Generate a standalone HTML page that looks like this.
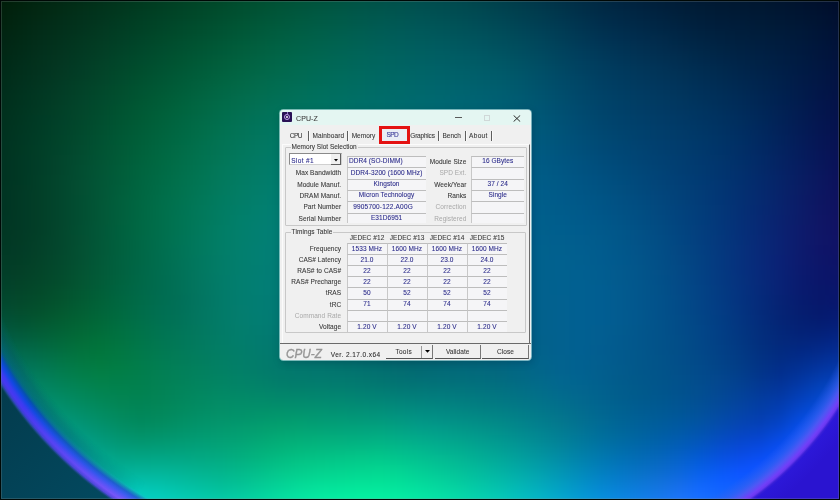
<!DOCTYPE html>
<html><head><meta charset="utf-8">
<style>
html,body{margin:0;padding:0;width:840px;height:500px;overflow:hidden;background:#03533a}
#bg{position:absolute;left:-20px;top:-20px;width:880px;filter:blur(2px)}
#bg i{display:block;height:5px}
#ov{position:absolute;left:0;top:0}
.frame{position:absolute;left:0;top:0;width:840px;height:500px;box-sizing:border-box;border:1px solid #000805;box-shadow:inset 0 0 0 1px rgba(140,150,150,.25)}
#win{will-change:transform;position:absolute;left:280px;top:110px;width:251px;height:250px;background:#f0f0f0;border-radius:3.5px;overflow:hidden;font-family:"Liberation Sans",sans-serif;font-size:6.5px;color:#303030;letter-spacing:0.08px;box-shadow:0 0 0 1px rgba(200,240,240,.6),1px 2px 8px rgba(0,10,30,.22)}
#win *{position:absolute;white-space:pre;line-height:1}
.tb{left:0;top:0;width:251px;height:15px;background:#e4f6f2}
.t{color:#383838;-webkit-text-stroke:0.08px #383838}
.tab{letter-spacing:0.15px}
.logo{font:italic 13.4px "Liberation Sans",sans-serif;color:#969696;letter-spacing:0.1px;-webkit-text-stroke:0.4px #969696;transform:scaleX(0.87);transform-origin:0 0}
.v{color:#2a2a8a;-webkit-text-stroke:0.08px #2a2a8a}
.g{color:#a8a8a8}
.box{background:#f5f5f7;border-top:1px solid #bdbdbd;border-left:1px solid #c8c8c8;box-sizing:border-box}
.grp{border:1px solid #c8c8c8;box-sizing:border-box;border-radius:1px}
.lbl{background:#f0f0f0;padding:0 1px}
.r{text-align:right}
.c{text-align:center}
.sep{width:1px;height:10.5px;background:#5e5e5e;border-right:1px solid #fafafa}
.btn{background:#f0f0f0;border-bottom:1px solid #555;border-right:1px solid #777;box-sizing:border-box}
</style></head><body>
<div id="bg">
<i style="background:linear-gradient(90deg,#001500 0px,#001904 20px,#011d08 40px,#01210b 60px,#01240e 80px,#012811 100px,#012c14 120px,#003017 140px,#003419 160px,#00381c 180px,#003b1f 200px,#003f21 220px,#004325 240px,#004628 260px,#00482c 280px,#004b2f 300px,#004c33 320px,#004d37 340px,#004d3b 360px,#004c3e 380px,#004b41 400px,#004a43 420px,#004745 440px,#004545 460px,#004245 480px,#003e45 500px,#003a44 520px,#003542 540px,#003141 560px,#002c3f 580px,#00273d 600px,#00233a 620px,#002038 640px,#001c35 660px,#001a32 680px,#00182f 700px,#00162d 720px,#00142b 740px,#001329 760px,#001228 780px,#001127 800px,#000f26 820px,#000c25 840px,#000923 860px,#000522 880px)"></i>
<i style="background:linear-gradient(90deg,#001602 0px,#001a05 20px,#011e09 40px,#01220c 60px,#012610 80px,#012a13 100px,#012d16 120px,#003118 140px,#00351b 160px,#00391d 180px,#003d20 200px,#004123 220px,#004426 240px,#00472a 260px,#004a2d 280px,#004d31 300px,#004e35 320px,#004f39 340px,#004f3d 360px,#004e40 380px,#004d43 400px,#004b46 420px,#004947 440px,#004748 460px,#004348 480px,#004047 500px,#003b46 520px,#003745 540px,#003243 560px,#002e41 580px,#00293f 600px,#00243d 620px,#00213a 640px,#001e37 660px,#001b34 680px,#001931 700px,#00172f 720px,#00152d 740px,#00142b 760px,#00132a 780px,#001229 800px,#001028 820px,#000d27 840px,#000a25 860px,#000623 880px)"></i>
<i style="background:linear-gradient(90deg,#001703 0px,#001b07 20px,#011f0a 40px,#01230e 60px,#012711 80px,#012b14 100px,#012f17 120px,#00331a 140px,#00371c 160px,#003b1f 180px,#003f22 200px,#004224 220px,#004628 240px,#00492b 260px,#004c2f 280px,#004e33 300px,#005037 320px,#00513b 340px,#00513f 360px,#005042 380px,#004f45 400px,#004d48 420px,#004b49 440px,#00484a 460px,#00454a 480px,#004149 500px,#003d48 520px,#003947 540px,#003445 560px,#002f43 580px,#002a41 600px,#00263f 620px,#00223c 640px,#001f39 660px,#001c36 680px,#001a33 700px,#001830 720px,#00162e 740px,#00152d 760px,#00142c 780px,#00132b 800px,#00112a 820px,#000e28 840px,#000b27 860px,#000725 880px)"></i>
<i style="background:linear-gradient(90deg,#001805 0px,#001c08 20px,#01200c 40px,#01240f 60px,#012813 80px,#012c16 100px,#013019 120px,#01341b 140px,#00381e 160px,#003c20 180px,#004023 200px,#004426 220px,#004829 240px,#004b2d 260px,#004e30 280px,#005034 300px,#005238 320px,#00523d 340px,#005340 360px,#005244 380px,#005147 400px,#004f4a 420px,#004d4b 440px,#004a4c 460px,#00474c 480px,#00434b 500px,#003f4a 520px,#003a49 540px,#003647 560px,#003146 580px,#002c43 600px,#002741 620px,#00233e 640px,#00203b 660px,#001e38 680px,#001b35 700px,#001932 720px,#001830 740px,#00162f 760px,#00152e 780px,#00142d 800px,#00122c 820px,#000f2a 840px,#000c29 860px,#010827 880px)"></i>
<i style="background:linear-gradient(90deg,#001906 0px,#001e09 20px,#01220d 40px,#012611 60px,#022914 80px,#012d17 100px,#01311a 120px,#01351d 140px,#003a1f 160px,#003e22 180px,#004224 200px,#004627 220px,#00492a 240px,#004d2e 260px,#005032 280px,#005236 300px,#00543a 320px,#00543e 340px,#005442 360px,#005446 380px,#005249 400px,#00514c 420px,#004f4e 440px,#004c4e 460px,#00494e 480px,#00454d 500px,#00414c 520px,#003c4b 540px,#00374a 560px,#003248 580px,#002d46 600px,#002943 620px,#002540 640px,#00223d 660px,#001f3a 680px,#001d37 700px,#001a34 720px,#001932 740px,#001831 760px,#001730 780px,#00152f 800px,#00132e 820px,#00102c 840px,#000d2b 860px,#010929 880px)"></i>
<i style="background:linear-gradient(90deg,#001a07 0px,#011f0b 20px,#01230e 40px,#022712 60px,#022b15 80px,#022f18 100px,#01331b 120px,#01371e 140px,#003b20 160px,#003f23 180px,#004326 200px,#004729 220px,#004b2c 240px,#004f30 260px,#005233 280px,#005438 300px,#00553c 320px,#005640 340px,#005644 360px,#005548 380px,#00544b 400px,#00534e 420px,#005050 440px,#004e50 460px,#004b50 480px,#00474f 500px,#00424e 520px,#003e4d 540px,#00394c 560px,#00344a 580px,#002f48 600px,#002a45 620px,#002643 640px,#002340 660px,#00203c 680px,#001e39 700px,#001c36 720px,#001a34 740px,#001933 760px,#001832 780px,#001631 800px,#001430 820px,#00112e 840px,#000d2c 860px,#01092b 880px)"></i>
<i style="background:linear-gradient(90deg,#001b08 0px,#01200c 20px,#012410 40px,#022813 60px,#022c16 80px,#02301a 100px,#01341d 120px,#01381f 140px,#003d22 160px,#004124 180px,#004527 200px,#00492a 220px,#004d2d 240px,#005031 260px,#005335 280px,#005639 300px,#00573e 320px,#005842 340px,#005846 360px,#00574a 380px,#00564d 400px,#005450 420px,#005252 440px,#004f52 460px,#004c52 480px,#004952 500px,#004451 520px,#00404f 540px,#003b4e 560px,#00364c 580px,#00304a 600px,#002b47 620px,#002845 640px,#002542 660px,#00223f 680px,#001f3b 700px,#001d38 720px,#001b36 740px,#001a35 760px,#001934 780px,#001733 800px,#001532 820px,#001230 840px,#000e2e 860px,#010a2c 880px)"></i>
<i style="background:linear-gradient(90deg,#001c0a 0px,#01210d 20px,#012511 40px,#022914 60px,#022d18 80px,#02311b 100px,#01351e 120px,#013a20 140px,#003e23 160px,#004226 180px,#004628 200px,#004a2b 220px,#004e2f 240px,#005232 260px,#005537 280px,#00573b 300px,#00593f 320px,#005a44 340px,#005a48 360px,#00594c 380px,#00584f 400px,#005652 420px,#005454 440px,#005154 460px,#004e54 480px,#004a54 500px,#004653 520px,#004151 540px,#003d50 560px,#00374f 580px,#00324c 600px,#002d4a 620px,#002947 640px,#002644 660px,#002341 680px,#00213d 700px,#001e3a 720px,#001c38 740px,#001b37 760px,#001a36 780px,#001835 800px,#001633 820px,#001332 840px,#000f30 860px,#010b2e 880px)"></i>
<i style="background:linear-gradient(90deg,#001d0b 0px,#01220e 20px,#012612 40px,#022a16 60px,#022e19 80px,#02321c 100px,#02361f 120px,#013b22 140px,#004024 160px,#004427 180px,#00482a 200px,#004c2d 220px,#005030 240px,#005434 260px,#005738 280px,#00593c 300px,#005b41 320px,#005b45 340px,#005b49 360px,#005a4d 380px,#005951 400px,#005854 420px,#005556 440px,#005356 460px,#005056 480px,#004c56 500px,#004855 520px,#004354 540px,#003e52 560px,#003951 580px,#00344f 600px,#002e4c 620px,#002a49 640px,#002846 660px,#002543 680px,#00223f 700px,#001f3c 720px,#001d3a 740px,#001c39 760px,#001b37 780px,#001936 800px,#001735 820px,#001433 840px,#010f31 860px,#010b30 880px)"></i>
<i style="background:linear-gradient(90deg,#001e0c 0px,#01230f 20px,#012713 40px,#022b17 60px,#022f1a 80px,#02331d 100px,#023820 120px,#013c23 140px,#004125 160px,#004528 180px,#004a2b 200px,#004e2e 220px,#005232 240px,#005635 260px,#00593a 280px,#005b3e 300px,#005c43 320px,#005d47 340px,#005d4b 360px,#005c4f 380px,#005b53 400px,#005956 420px,#005758 440px,#005558 460px,#005258 480px,#004e58 500px,#004a57 520px,#004556 540px,#004055 560px,#003b53 580px,#003551 600px,#00304e 620px,#002c4b 640px,#002948 660px,#002645 680px,#002342 700px,#00203e 720px,#001e3c 740px,#001d3b 760px,#001c39 780px,#001a38 800px,#001837 820px,#001435 840px,#011033 860px,#020c31 880px)"></i>
<i style="background:linear-gradient(90deg,#001f0d 0px,#012411 20px,#012814 40px,#022c18 60px,#02301b 80px,#02341e 100px,#023921 120px,#013e24 140px,#004226 160px,#004729 180px,#004b2c 200px,#004f2f 220px,#005333 240px,#005737 260px,#005a3b 280px,#005d40 300px,#005e44 320px,#005f49 340px,#005e4d 360px,#005e51 380px,#005c55 400px,#005b58 420px,#00595a 440px,#00565a 460px,#00535a 480px,#00505a 500px,#004c59 520px,#004758 540px,#004257 560px,#003d55 580px,#003753 600px,#003250 620px,#002e4e 640px,#002b4b 660px,#002847 680px,#002544 700px,#002240 720px,#00203e 740px,#001e3c 760px,#001d3b 780px,#001b3a 800px,#001939 820px,#001537 840px,#011135 860px,#020c33 880px)"></i>
<i style="background:linear-gradient(90deg,#00200e 0px,#012412 20px,#012915 40px,#022d19 60px,#02311c 80px,#02361f 100px,#023a22 120px,#013f25 140px,#004428 160px,#00492a 180px,#004d2d 200px,#005131 220px,#005534 240px,#005938 260px,#005c3d 280px,#005e41 300px,#006046 320px,#00604a 340px,#00604f 360px,#005f53 380px,#005e56 400px,#005c5a 420px,#005a5b 440px,#00585c 460px,#00555c 480px,#00525c 500px,#004e5b 520px,#00495a 540px,#004459 560px,#003e57 580px,#003955 600px,#003353 620px,#002f50 640px,#002c4d 660px,#012a4a 680px,#002646 700px,#002342 720px,#002140 740px,#001f3e 760px,#001e3d 780px,#001c3c 800px,#00193a 820px,#001538 840px,#011136 860px,#020c34 880px)"></i>
<i style="background:linear-gradient(90deg,#00210f 0px,#012513 20px,#012a16 40px,#022e1a 60px,#02321d 80px,#023720 100px,#023c23 120px,#014026 140px,#004529 160px,#004a2b 180px,#004f2f 200px,#005332 220px,#005736 240px,#005b3a 260px,#015e3e 280px,#006043 300px,#006148 320px,#00624c 340px,#006250 360px,#006154 380px,#005f58 400px,#005e5b 420px,#005c5d 440px,#005a5e 460px,#00575e 480px,#00535e 500px,#004f5d 520px,#004b5c 540px,#00465b 560px,#004059 580px,#003a57 600px,#003555 620px,#003152 640px,#012e4f 660px,#012b4c 680px,#002848 700px,#002545 720px,#002242 740px,#002040 760px,#001e3f 780px,#001c3e 800px,#001a3c 820px,#00163a 840px,#011138 860px,#020d36 880px)"></i>
<i style="background:linear-gradient(90deg,#002210 0px,#012614 20px,#012b17 40px,#022f1b 60px,#02331e 80px,#023821 100px,#023d24 120px,#014227 140px,#00472a 160px,#004c2d 180px,#005030 200px,#005533 220px,#005937 240px,#015d3b 260px,#016040 280px,#006245 300px,#006349 320px,#00634e 340px,#006352 360px,#006256 380px,#00615a 400px,#005f5d 420px,#005d5f 440px,#005b60 460px,#005860 480px,#005560 500px,#00515f 520px,#004d5e 540px,#00475d 560px,#00425b 580px,#003c5a 600px,#003757 620px,#003354 640px,#013051 660px,#012d4e 680px,#01294a 700px,#002647 720px,#002444 740px,#002142 760px,#001f41 780px,#001d3f 800px,#001a3e 820px,#00163c 840px,#011239 860px,#020d37 880px)"></i>
<i style="background:linear-gradient(90deg,#002311 0px,#012714 20px,#012b18 40px,#02301c 60px,#03341f 80px,#023922 100px,#023e25 120px,#014328 140px,#00482b 160px,#004d2e 180px,#005231 200px,#005635 220px,#005a39 240px,#015e3d 260px,#016141 280px,#016346 300px,#00644b 320px,#00654f 340px,#006454 360px,#006458 380px,#00625b 400px,#00615e 420px,#005f60 440px,#005d62 460px,#005a62 480px,#005762 500px,#005361 520px,#004e60 540px,#00495f 560px,#00435e 580px,#003e5c 600px,#003959 620px,#003456 640px,#013153 660px,#012e50 680px,#012b4d 700px,#002849 720px,#002546 740px,#002244 760px,#002043 780px,#001d41 800px,#001a3f 820px,#01163d 840px,#02123b 860px,#030d39 880px)"></i>
<i style="background:linear-gradient(90deg,#002312 0px,#002815 20px,#012c19 40px,#02311d 60px,#033520 80px,#023a23 100px,#023f26 120px,#014529 140px,#004a2c 160px,#004f2f 180px,#005432 200px,#005836 220px,#015c3a 240px,#01603e 260px,#016343 280px,#016548 300px,#00664d 320px,#006651 340px,#006655 360px,#006559 380px,#00645d 400px,#006260 420px,#006062 440px,#005e63 460px,#005c64 480px,#005964 500px,#005563 520px,#005062 540px,#004b61 560px,#00455f 580px,#003f5e 600px,#003a5b 620px,#003658 640px,#013355 660px,#013052 680px,#012d4f 700px,#00294b 720px,#002649 740px,#002346 760px,#002145 780px,#001e43 800px,#001b41 820px,#01163e 840px,#02123c 860px,#030d3a 880px)"></i>
<i style="background:linear-gradient(90deg,#002413 0px,#002916 20px,#012d1a 40px,#02321d 60px,#033621 80px,#023b24 100px,#024127 120px,#01462a 140px,#004b2d 160px,#005030 180px,#005533 200px,#005a37 220px,#015e3b 240px,#016240 260px,#016445 280px,#01664a 300px,#00674e 320px,#006853 340px,#006757 360px,#00665b 380px,#00655e 400px,#006361 420px,#006164 440px,#005f65 460px,#005d65 480px,#005a65 500px,#005765 520px,#005264 540px,#004c63 560px,#004661 580px,#004160 600px,#003c5d 620px,#00375a 640px,#013457 660px,#013154 680px,#012e51 700px,#002a4e 720px,#00274b 740px,#002448 760px,#002246 780px,#001e44 800px,#001b42 820px,#011740 840px,#02123e 860px,#030d3c 880px)"></i>
<i style="background:linear-gradient(90deg,#002514 0px,#002917 20px,#012e1b 40px,#02321e 60px,#033722 80px,#023c25 100px,#024228 120px,#01472a 140px,#004d2d 160px,#005231 180px,#005734 200px,#005b39 220px,#015f3d 240px,#016341 260px,#016646 280px,#01684b 300px,#006950 320px,#006954 340px,#006858 360px,#00675c 380px,#006660 400px,#006463 420px,#006365 440px,#006167 460px,#005e67 480px,#005c67 500px,#005867 520px,#005366 540px,#004e65 560px,#004863 580px,#004261 600px,#003d5f 620px,#00395c 640px,#013659 660px,#013357 680px,#012f53 700px,#002c50 720px,#00294d 740px,#00254a 760px,#002248 780px,#001f46 800px,#001b44 820px,#011741 840px,#02123f 860px,#030e3d 880px)"></i>
<i style="background:linear-gradient(90deg,#002614 0px,#002a18 20px,#012f1b 40px,#02331f 60px,#033822 80px,#023d26 100px,#024328 120px,#01492b 140px,#004e2e 160px,#005332 180px,#005836 200px,#005d3a 220px,#01613e 240px,#016543 260px,#016748 280px,#01694d 300px,#016a52 320px,#006a56 340px,#006a5a 360px,#00695e 380px,#006761 400px,#006664 420px,#006467 440px,#006268 460px,#006069 480px,#005d69 500px,#005a69 520px,#005568 540px,#004f67 560px,#004965 580px,#004363 600px,#003e60 620px,#003a5e 640px,#01375b 660px,#013458 680px,#013155 700px,#002d52 720px,#002a4f 740px,#00264c 760px,#00234a 780px,#001f48 800px,#001b45 820px,#011743 840px,#021240 860px,#030e3e 880px)"></i>
<i style="background:linear-gradient(90deg,#002615 0px,#002b19 20px,#01301c 40px,#023420 60px,#033923 80px,#023e26 100px,#024429 120px,#014a2c 140px,#00502f 160px,#005533 180px,#005a37 200px,#005e3b 220px,#016340 240px,#016645 260px,#02694a 280px,#016a4f 300px,#016b53 320px,#006b58 340px,#006b5c 360px,#006a5f 380px,#006863 400px,#006766 420px,#006568 440px,#00636a 460px,#00616a 480px,#005e6b 500px,#005b6b 520px,#00566a 540px,#005069 560px,#004a67 580px,#004565 600px,#003f62 620px,#003b5f 640px,#01385d 660px,#01355a 680px,#013257 700px,#002e54 720px,#002b51 740px,#00274e 760px,#00244c 780px,#002049 800px,#011b47 820px,#011744 840px,#031242 860px,#040e40 880px)"></i>
<i style="background:linear-gradient(90deg,#002716 0px,#002c19 20px,#01301d 40px,#023520 60px,#023a24 80px,#024027 100px,#02452a 120px,#014b2d 140px,#005130 160px,#005634 180px,#005b38 200px,#01603d 220px,#016441 240px,#026846 260px,#026a4c 280px,#016c51 300px,#016c55 320px,#006c59 340px,#006c5d 360px,#006b61 380px,#006964 400px,#006867 420px,#00666a 440px,#00646b 460px,#00626c 480px,#005f6c 500px,#005c6c 520px,#00576c 540px,#00516a 560px,#004b69 580px,#004666 600px,#004064 620px,#003c61 640px,#01395e 660px,#01365c 680px,#013359 700px,#002f56 720px,#002c53 740px,#002850 760px,#00244e 780px,#00204b 800px,#011b48 820px,#021745 840px,#031243 860px,#040e41 880px)"></i>
<i style="background:linear-gradient(90deg,#002817 0px,#002c1a 20px,#01311e 40px,#023621 60px,#023b25 80px,#024128 100px,#02472b 120px,#014d2d 140px,#005331 160px,#005835 180px,#005d39 200px,#01613e 220px,#016643 240px,#026948 260px,#026c4d 280px,#016d52 300px,#016e57 320px,#006e5b 340px,#006d5f 360px,#006c62 380px,#006a66 400px,#006969 420px,#00676b 440px,#00656d 460px,#00636e 480px,#00606e 500px,#005d6e 520px,#00586d 540px,#00526c 560px,#004c6a 580px,#004768 600px,#004165 620px,#003d62 640px,#013a60 660px,#01375e 680px,#01345b 700px,#003058 720px,#002d55 740px,#002952 760px,#00254f 780px,#00204c 800px,#011b4a 820px,#021747 840px,#031244 860px,#040e42 880px)"></i>
<i style="background:linear-gradient(90deg,#002817 0px,#002d1b 20px,#00321e 40px,#013722 60px,#023c25 80px,#024228 100px,#01482b 120px,#014e2e 140px,#005432 160px,#005935 180px,#005e3a 200px,#01633f 220px,#016745 240px,#026a4a 260px,#026d4f 280px,#016e54 300px,#016f59 320px,#006f5d 340px,#006e60 360px,#006d64 380px,#006b67 400px,#006a6a 420px,#00686c 440px,#00666e 460px,#00646f 480px,#006170 500px,#005e70 520px,#00596f 540px,#00536e 560px,#004d6c 580px,#004769 600px,#004267 620px,#003e64 640px,#013b62 660px,#01385f 680px,#01355c 700px,#00315a 720px,#002e57 740px,#002a54 760px,#002551 780px,#00214e 800px,#011c4b 820px,#021648 840px,#031245 860px,#050d43 880px)"></i>
<i style="background:linear-gradient(90deg,#002918 0px,#002e1b 20px,#00331f 40px,#013822 60px,#023d26 80px,#024329 100px,#01492c 120px,#014f2f 140px,#005532 160px,#005b36 180px,#00603b 200px,#016441 220px,#016846 240px,#026c4c 260px,#026e51 280px,#016f56 300px,#01705a 320px,#00705e 340px,#006f62 360px,#006e65 380px,#006c69 400px,#006a6b 420px,#00696e 440px,#00676f 460px,#006471 480px,#006271 500px,#005e71 520px,#005a71 540px,#00546f 560px,#004e6d 580px,#00486b 600px,#004368 620px,#003f65 640px,#013c63 660px,#013961 680px,#01365e 700px,#00325b 720px,#002f59 740px,#002b56 760px,#002653 780px,#002150 800px,#011c4c 820px,#021649 840px,#041247 860px,#050d45 880px)"></i>
<i style="background:linear-gradient(90deg,#002a19 0px,#002e1c 20px,#00331f 40px,#013823 60px,#023e26 80px,#02442a 100px,#014a2d 120px,#005030 140px,#005733 160px,#005c37 180px,#00613c 200px,#016642 220px,#016a48 240px,#026d4d 260px,#026f53 280px,#017058 300px,#01715c 320px,#007160 340px,#007063 360px,#006e67 380px,#006d6a 400px,#006b6d 420px,#00696f 440px,#006771 460px,#006572 480px,#006273 500px,#005f73 520px,#005a72 540px,#005571 560px,#004f6f 580px,#00496c 600px,#004469 620px,#004067 640px,#013d64 660px,#013a62 680px,#013760 700px,#00335d 720px,#002f5a 740px,#002b58 760px,#002654 780px,#002151 800px,#011c4e 820px,#03164b 840px,#041148 860px,#050d46 880px)"></i>
<i style="background:linear-gradient(90deg,#002a19 0px,#002f1c 20px,#003420 40px,#013923 60px,#023f27 80px,#02452a 100px,#014b2d 120px,#005230 140px,#005834 160px,#005d38 180px,#00633d 200px,#016743 220px,#016b49 240px,#026e4f 260px,#027055 280px,#01725a 300px,#01725e 320px,#017261 340px,#007165 360px,#006f68 380px,#006e6b 400px,#006c6e 420px,#006a70 440px,#006872 460px,#006673 480px,#006374 500px,#006074 520px,#005b74 540px,#005573 560px,#004f71 580px,#004a6e 600px,#00446b 620px,#004068 640px,#013d66 660px,#013a64 680px,#013761 700px,#00345f 720px,#00305c 740px,#002c59 760px,#002756 780px,#012153 800px,#021c4f 820px,#03164c 840px,#041149 860px,#060d47 880px)"></i>
<i style="background:linear-gradient(90deg,#002b1a 0px,#00301d 20px,#003520 40px,#013a24 60px,#014027 80px,#02462b 100px,#014c2e 120px,#005331 140px,#005935 160px,#005f39 180px,#00643e 200px,#016844 220px,#016c4b 240px,#026f51 260px,#027157 280px,#01735b 300px,#01735f 320px,#017263 340px,#007166 360px,#00706a 380px,#006e6d 400px,#006c6f 420px,#006a72 440px,#006873 460px,#006675 480px,#006376 500px,#006076 520px,#005b75 540px,#005674 560px,#005072 580px,#004a6f 600px,#00456c 620px,#004169 640px,#013e67 660px,#013b65 680px,#013863 700px,#003561 720px,#00315e 740px,#002c5b 760px,#002758 780px,#012254 800px,#021c51 820px,#03164d 840px,#05114a 860px,#060d48 880px)"></i>
<i style="background:linear-gradient(90deg,#002b1a 0px,#00301d 20px,#003521 40px,#003b25 60px,#014028 80px,#02472b 100px,#014d2f 120px,#005432 140px,#005a35 160px,#00603a 180px,#006540 200px,#016946 220px,#016d4c 240px,#027053 260px,#017258 280px,#01735d 300px,#017461 320px,#017365 340px,#007268 360px,#00716b 380px,#006f6e 400px,#006d70 420px,#006b73 440px,#006975 460px,#006776 480px,#006477 500px,#006077 520px,#005c77 540px,#005776 560px,#005174 580px,#004b71 600px,#00466d 620px,#00426b 640px,#013f69 660px,#013c67 680px,#013965 700px,#003562 720px,#003260 740px,#002d5d 760px,#002859 780px,#012256 800px,#021c52 820px,#04164e 840px,#05114c 860px,#070d4a 880px)"></i>
<i style="background:linear-gradient(90deg,#002c1b 0px,#00311e 20px,#003621 40px,#003b25 60px,#014129 80px,#01472c 100px,#014e2f 120px,#005532 140px,#005b36 160px,#00613b 180px,#006641 200px,#016b47 220px,#016e4e 240px,#027154 260px,#01735a 280px,#01745f 300px,#017563 320px,#017466 340px,#007369 360px,#00716c 380px,#006f6f 400px,#006d72 420px,#006b74 440px,#006976 460px,#006777 480px,#006478 500px,#006179 520px,#005c79 540px,#005777 560px,#005175 580px,#004c72 600px,#00466f 620px,#00426c 640px,#003f6a 660px,#013c68 680px,#003966 700px,#003664 720px,#003261 740px,#002e5e 760px,#00285b 780px,#012257 800px,#031c53 820px,#041650 840px,#05114d 860px,#070d4b 880px)"></i>
<i style="background:linear-gradient(90deg,#002c1b 0px,#00311e 20px,#003622 40px,#003c25 60px,#014229 80px,#01482c 100px,#014f30 120px,#005633 140px,#005c37 160px,#00623c 180px,#006742 200px,#016c48 220px,#01704f 240px,#027256 260px,#01745c 280px,#017560 300px,#017564 320px,#017567 340px,#00736b 360px,#00726d 380px,#007070 400px,#006e73 420px,#006c75 440px,#006a77 460px,#006778 480px,#00647a 500px,#00617a 520px,#005d7a 540px,#005879 560px,#005277 580px,#004c74 600px,#004770 620px,#00436d 640px,#00406c 660px,#013d6a 680px,#003a68 700px,#003765 720px,#003363 740px,#002e60 760px,#00285d 780px,#022259 800px,#031c55 820px,#041651 840px,#06114e 860px,#070d4c 880px)"></i>
<i style="background:linear-gradient(90deg,#002d1c 0px,#00311f 20px,#003722 40px,#003c26 60px,#01422a 80px,#01492d 100px,#015030 120px,#005734 140px,#005d38 160px,#00633d 180px,#006843 200px,#016d49 220px,#017150 240px,#027357 260px,#01755d 280px,#017662 300px,#017666 320px,#017569 340px,#00746c 360px,#00726f 380px,#007071 400px,#006e74 420px,#006c76 440px,#006a78 460px,#00677a 480px,#00657b 500px,#00617b 520px,#005d7b 540px,#00587a 560px,#005378 580px,#004d75 600px,#004872 620px,#00446f 640px,#00416d 660px,#013e6b 680px,#013b69 700px,#003767 720px,#003364 740px,#002e62 760px,#01295e 780px,#02225a 800px,#031c56 820px,#051652 840px,#06114f 860px,#080d4d 880px)"></i>
<i style="background:linear-gradient(90deg,#002d1c 0px,#00321f 20px,#003723 40px,#003d26 60px,#01432a 80px,#014a2e 100px,#015131 120px,#005835 140px,#005e39 160px,#00643e 180px,#006944 200px,#016e4a 220px,#017252 240px,#027458 260px,#02765e 280px,#017763 300px,#017767 320px,#01766a 340px,#01746d 360px,#007270 380px,#007072 400px,#006e75 420px,#006c77 440px,#006a79 460px,#00687b 480px,#00657c 500px,#00617d 520px,#005d7d 540px,#00587c 560px,#00537a 580px,#004e77 600px,#004973 620px,#004570 640px,#00416e 660px,#013e6c 680px,#013b6a 700px,#003868 720px,#003466 740px,#002f63 760px,#012960 780px,#02235c 800px,#041c58 820px,#051654 840px,#071151 860px,#080d4f 880px)"></i>
<i style="background:linear-gradient(90deg,#002d1d 0px,#003220 20px,#003723 40px,#003d27 60px,#01442a 80px,#024a2e 100px,#015132 120px,#005935 140px,#005f39 160px,#00653f 180px,#006a45 200px,#016f4c 220px,#027353 240px,#02755a 260px,#027760 280px,#017865 300px,#017768 320px,#01766c 340px,#01756e 360px,#007371 380px,#007173 400px,#006e76 420px,#006c78 440px,#006a7a 460px,#00687c 480px,#00657d 500px,#00627e 520px,#005e7e 540px,#00597d 560px,#00547b 580px,#004f78 600px,#004a75 620px,#004672 640px,#014270 660px,#013f6e 680px,#013c6c 700px,#00386a 720px,#003467 740px,#002f65 760px,#012961 780px,#02235d 800px,#041c59 820px,#061655 840px,#071152 860px,#090d50 880px)"></i>
<i style="background:linear-gradient(90deg,#002e1d 0px,#003220 20px,#003823 40px,#003e27 60px,#01442b 80px,#024b2f 100px,#015232 120px,#015936 140px,#00603a 160px,#006640 180px,#016b46 200px,#01704d 220px,#027354 240px,#02765b 260px,#027861 280px,#017866 300px,#01786a 320px,#01776d 340px,#01756f 360px,#007372 380px,#007174 400px,#006f77 420px,#006c79 440px,#006a7b 460px,#00687d 480px,#00657e 500px,#00627f 520px,#005e7f 540px,#00597f 560px,#00547d 580px,#004f7a 600px,#004a76 620px,#004674 640px,#014371 660px,#013f6f 680px,#013c6d 700px,#00386b 720px,#003469 740px,#012f66 760px,#012963 780px,#03235f 800px,#041c5b 820px,#061656 840px,#081153 860px,#090d51 880px)"></i>
<i style="background:linear-gradient(90deg,#002e1d 0px,#003220 20px,#003823 40px,#013e27 60px,#01442b 80px,#024b2f 100px,#015333 120px,#015a37 140px,#00613b 160px,#006741 180px,#016c47 200px,#01714e 220px,#027455 240px,#02775c 260px,#027962 280px,#017967 300px,#01796b 320px,#01776e 340px,#017571 360px,#017373 380px,#007175 400px,#006f78 420px,#006c7a 440px,#006a7c 460px,#00687e 480px,#00657f 500px,#006280 520px,#005e81 540px,#005a80 560px,#00557e 580px,#00507b 600px,#004b78 620px,#004775 640px,#014473 660px,#014070 680px,#013d6e 700px,#01396c 720px,#00346a 740px,#012f67 760px,#022964 780px,#032360 800px,#051d5c 820px,#071658 840px,#091154 860px,#0a0d52 880px)"></i>
<i style="background:linear-gradient(90deg,#002e1e 0px,#003320 20px,#003824 40px,#013e27 60px,#02452c 80px,#024c30 100px,#015334 120px,#015b37 140px,#00623c 160px,#006841 180px,#016d48 200px,#01724f 220px,#027556 240px,#02785d 260px,#027964 280px,#017a68 300px,#01796c 320px,#01786f 340px,#017672 360px,#017374 380px,#007176 400px,#006f78 420px,#006c7a 440px,#006a7c 460px,#00687e 480px,#006580 500px,#006281 520px,#005e82 540px,#005a82 560px,#005580 580px,#00517d 600px,#004c7a 620px,#004877 640px,#014474 660px,#014172 680px,#013d70 700px,#01396e 720px,#01356b 740px,#012f69 760px,#022a66 780px,#042362 800px,#051d5d 820px,#071659 840px,#091156 860px,#0b0d53 880px)"></i>
<i style="background:linear-gradient(90deg,#002e1e 0px,#003321 20px,#003824 40px,#013e28 60px,#02452c 80px,#024c30 100px,#025434 120px,#015b38 140px,#00623d 160px,#006942 180px,#016e49 200px,#017250 220px,#027657 240px,#02795f 260px,#027a65 280px,#017a6a 300px,#01796d 320px,#017870 340px,#017673 360px,#017375 380px,#017177 400px,#006f79 420px,#006c7b 440px,#006a7d 460px,#00687f 480px,#006581 500px,#006282 520px,#005e83 540px,#005a83 560px,#005681 580px,#00527f 600px,#004d7b 620px,#004978 640px,#014575 660px,#014173 680px,#013e71 700px,#01396f 720px,#01356d 740px,#01306a 760px,#022a67 780px,#042363 800px,#061d5f 820px,#08175a 840px,#0a1157 860px,#0b0d55 880px)"></i>
<i style="background:linear-gradient(90deg,#002f1f 0px,#003321 20px,#003824 40px,#013e28 60px,#02452c 80px,#024d31 100px,#025435 120px,#015c39 140px,#00633e 160px,#006943 180px,#016f4a 200px,#017351 220px,#027759 240px,#027960 260px,#027b66 280px,#017b6b 300px,#017a6e 320px,#017871 340px,#017673 360px,#017376 380px,#017178 400px,#016e7a 420px,#006c7c 440px,#006a7e 460px,#006780 480px,#006582 500px,#006283 520px,#005f84 540px,#005b84 560px,#005783 580px,#005280 600px,#004e7d 620px,#004a7a 640px,#014677 660px,#014274 680px,#013e72 700px,#013a70 720px,#01356e 740px,#02306b 760px,#032a68 780px,#042364 800px,#071d60 820px,#09175b 840px,#0a1158 860px,#0c0d56 880px)"></i>
<i style="background:linear-gradient(90deg,#002f1f 0px,#003321 20px,#003824 40px,#013e28 60px,#02452c 80px,#024d31 100px,#025535 120px,#015d39 140px,#00643e 160px,#006a44 180px,#016f4b 200px,#017452 220px,#02785a 240px,#027a61 260px,#027b67 280px,#017b6c 300px,#017a6f 320px,#017872 340px,#017674 360px,#017376 380px,#017178 400px,#016e7a 420px,#006c7c 440px,#006a7e 460px,#006780 480px,#006582 500px,#006284 520px,#005f85 540px,#005b85 560px,#005784 580px,#005381 600px,#004f7e 620px,#004b7b 640px,#014778 660px,#014376 680px,#013e73 700px,#013a71 720px,#01356f 740px,#02306d 760px,#032a69 780px,#052366 800px,#071d61 820px,#09175d 840px,#0b1159 860px,#0c0d57 880px)"></i>
<i style="background:linear-gradient(90deg,#002f1f 0px,#003321 20px,#003824 40px,#013f28 60px,#02462d 80px,#024d31 100px,#025536 120px,#015d3a 140px,#00643f 160px,#006b45 180px,#01704c 200px,#017553 220px,#02785b 240px,#027b62 260px,#027c68 280px,#017c6d 300px,#017b70 320px,#017973 340px,#017675 360px,#017377 380px,#017179 400px,#016e7b 420px,#016c7d 440px,#00697f 460px,#006781 480px,#006583 500px,#006285 520px,#005f86 540px,#005c86 560px,#005885 580px,#005483 600px,#005080 620px,#004c7c 640px,#01487a 660px,#014377 680px,#013f75 700px,#013a73 720px,#013570 740px,#02306e 760px,#032a6b 780px,#052467 800px,#081d62 820px,#0a175e 840px,#0c115a 860px,#0d0e58 880px)"></i>
<i style="background:linear-gradient(90deg,#002f1f 0px,#003321 20px,#003824 40px,#013f28 60px,#02462d 80px,#034e32 100px,#025636 120px,#015d3a 140px,#006540 160px,#006b46 180px,#01714d 200px,#017554 220px,#02795c 240px,#027b63 260px,#027c69 280px,#017c6e 300px,#017b71 320px,#017974 340px,#017676 360px,#017378 380px,#017079 400px,#016e7b 420px,#016b7d 440px,#00697f 460px,#006782 480px,#006584 500px,#006285 520px,#005f87 540px,#005c87 560px,#005986 580px,#005584 600px,#005181 620px,#004d7e 640px,#01487b 660px,#024478 680px,#023f76 700px,#013b74 720px,#023672 740px,#02306f 760px,#042a6c 780px,#062368 800px,#081d63 820px,#0b175f 840px,#0c115b 860px,#0d0e59 880px)"></i>
<i style="background:linear-gradient(90deg,#003020 0px,#003422 20px,#013824 40px,#013f28 60px,#02462d 80px,#034e32 100px,#025636 120px,#015e3b 140px,#006540 160px,#006c47 180px,#01714e 200px,#017655 220px,#02795d 240px,#027c64 260px,#027d6a 280px,#017d6f 300px,#017b72 320px,#017975 340px,#017677 360px,#017378 380px,#01707a 400px,#016e7c 420px,#016b7e 440px,#016980 460px,#006782 480px,#006584 500px,#006286 520px,#005f87 540px,#005c88 560px,#005987 580px,#005685 600px,#005282 620px,#014e7f 640px,#01497c 660px,#024579 680px,#024077 700px,#023b75 720px,#023673 740px,#033070 760px,#042a6d 780px,#062369 800px,#091d64 820px,#0b1760 840px,#0d115c 860px,#0e0e5a 880px)"></i>
<i style="background:linear-gradient(90deg,#003020 0px,#003422 20px,#013925 40px,#023f28 60px,#02462d 80px,#034e32 100px,#025637 120px,#015e3b 140px,#006641 160px,#006c47 180px,#01724e 200px,#017656 220px,#027a5e 240px,#027d65 260px,#027d6b 280px,#017d70 300px,#017b73 320px,#017975 340px,#017677 360px,#017379 380px,#01707a 400px,#016d7c 420px,#016b7e 440px,#016880 460px,#006682 480px,#006485 500px,#006287 520px,#006088 540px,#005d89 560px,#005a88 580px,#005686 600px,#005383 620px,#014f80 640px,#014a7d 660px,#02457b 680px,#024178 700px,#023c76 720px,#023674 740px,#033071 760px,#052a6e 780px,#07236a 800px,#0a1d65 820px,#0c1661 840px,#0e115d 860px,#0e0e5b 880px)"></i>
<i style="background:linear-gradient(90deg,#003020 0px,#003422 20px,#013925 40px,#023f28 60px,#02462d 80px,#024e32 100px,#025637 120px,#015f3c 140px,#006641 160px,#006d48 180px,#01724f 200px,#017757 220px,#017b5f 240px,#027d66 260px,#027e6c 280px,#017d71 300px,#017b74 320px,#017976 340px,#017678 360px,#017379 380px,#01707b 400px,#016d7c 420px,#016a7e 440px,#016880 460px,#016683 480px,#006485 500px,#006287 520px,#006089 540px,#005d89 560px,#005a89 580px,#005787 600px,#005485 620px,#015082 640px,#014b7f 660px,#02467c 680px,#024179 700px,#023c77 720px,#023675 740px,#033072 760px,#052a6f 780px,#07236b 800px,#0a1c66 820px,#0d1661 840px,#0e115e 860px,#0f0e5c 880px)"></i>
<i style="background:linear-gradient(90deg,#003121 0px,#003422 20px,#013925 40px,#023f28 60px,#02462d 80px,#024e32 100px,#025737 120px,#015f3c 140px,#006742 160px,#006d49 180px,#007350 200px,#017758 220px,#017b60 240px,#027d67 260px,#027e6d 280px,#017d71 300px,#017b74 320px,#017977 340px,#017578 360px,#01727a 380px,#016f7b 400px,#016c7d 420px,#016a7e 440px,#016881 460px,#016683 480px,#006485 500px,#006287 520px,#006089 540px,#005e8a 560px,#005b8a 580px,#005888 600px,#005586 620px,#015083 640px,#014c80 660px,#02477d 680px,#02427a 700px,#023c78 720px,#023676 740px,#043073 760px,#062a70 780px,#08236c 800px,#0b1c67 820px,#0d1662 840px,#0f115f 860px,#0f0e5d 880px)"></i>
<i style="background:linear-gradient(90deg,#003121 0px,#003422 20px,#013925 40px,#023f28 60px,#02462d 80px,#024e32 100px,#025737 120px,#015f3c 140px,#006742 160px,#006e49 180px,#007351 200px,#017859 220px,#017b61 240px,#017e68 260px,#027f6e 280px,#017e72 300px,#017b75 320px,#017977 340px,#017578 360px,#01727a 380px,#016f7b 400px,#016c7d 420px,#01697f 440px,#016781 460px,#016583 480px,#016485 500px,#006288 520px,#006089 540px,#005e8b 560px,#005c8a 580px,#005989 600px,#005587 620px,#015184 640px,#014d81 660px,#02487e 680px,#02427c 700px,#023d79 720px,#033777 740px,#043074 760px,#062971 780px,#08236d 800px,#0b1c68 820px,#0e1663 840px,#0f1160 860px,#0f0e5e 880px)"></i>
<i style="background:linear-gradient(90deg,#003122 0px,#003422 20px,#013925 40px,#023f28 60px,#02462d 80px,#024e32 100px,#025737 120px,#015f3d 140px,#006743 160px,#006e4a 180px,#007352 200px,#01785a 220px,#017c62 240px,#017e69 260px,#017f6f 280px,#027e73 300px,#017b76 320px,#017877 340px,#017579 360px,#01717a 380px,#016e7b 400px,#016b7d 420px,#01697f 440px,#016781 460px,#016583 480px,#016386 500px,#006288 520px,#00608a 540px,#005e8b 560px,#005c8b 580px,#005a8a 600px,#005688 620px,#015285 640px,#014e82 660px,#02487f 680px,#02437d 700px,#023d7a 720px,#033778 740px,#043075 760px,#062972 780px,#09236e 800px,#0c1c69 820px,#0e1664 840px,#0f1160 860px,#100e5f 880px)"></i>
<i style="background:linear-gradient(90deg,#003222 0px,#003523 20px,#013925 40px,#023f28 60px,#02462d 80px,#024e32 100px,#025737 120px,#015f3d 140px,#006743 160px,#006e4a 180px,#007452 200px,#01785a 220px,#017c62 240px,#017f6a 260px,#017f70 280px,#027e74 300px,#027b76 320px,#017878 340px,#017579 360px,#01717a 380px,#016e7b 400px,#016b7d 420px,#01687f 440px,#016681 460px,#016583 480px,#016386 500px,#016288 520px,#00608a 540px,#005f8b 560px,#005d8c 580px,#005a8b 600px,#005789 620px,#015386 640px,#014e83 660px,#024980 680px,#02437e 700px,#023d7b 720px,#033779 740px,#043076 760px,#072973 780px,#09226f 800px,#0c1c69 820px,#0f1665 840px,#101161 860px,#100e60 880px)"></i>
<i style="background:linear-gradient(90deg,#003222 0px,#013523 20px,#013925 40px,#023f28 60px,#03462d 80px,#024e32 100px,#025737 120px,#01603d 140px,#006844 160px,#006e4b 180px,#007453 200px,#01795b 220px,#017c63 240px,#017f6b 260px,#027f70 280px,#027e74 300px,#027b77 320px,#027878 340px,#017479 360px,#01707a 380px,#016d7b 400px,#016a7d 420px,#01687e 440px,#016681 460px,#016483 480px,#016386 500px,#016288 520px,#00618a 540px,#005f8c 560px,#005d8c 580px,#005b8b 600px,#00588a 620px,#015487 640px,#014f84 660px,#024a81 680px,#02447e 700px,#023e7c 720px,#03377a 740px,#053077 760px,#072974 780px,#0a226f 800px,#0c1c6a 820px,#0f1665 840px,#101162 860px,#100e61 880px)"></i>
<i style="background:linear-gradient(90deg,#003323 0px,#013623 20px,#013925 40px,#023f28 60px,#03462d 80px,#024f32 100px,#025738 120px,#00603d 140px,#006844 160px,#006e4b 180px,#007453 200px,#01795c 220px,#017d64 240px,#017f6b 260px,#027f71 280px,#027e75 300px,#027b77 320px,#027878 340px,#027479 360px,#01707a 380px,#016c7b 400px,#01697d 420px,#01677e 440px,#016580 460px,#016483 480px,#016386 500px,#016288 520px,#01618b 540px,#005f8c 560px,#005e8d 580px,#005c8c 600px,#00598a 620px,#015588 640px,#015085 660px,#024b82 680px,#02457f 700px,#033e7d 720px,#03377b 740px,#053078 760px,#072975 780px,#0a2270 800px,#0d1b6b 820px,#0f1666 840px,#101163 860px,#100f62 880px)"></i>
<i style="background:linear-gradient(90deg,#003423 0px,#013623 20px,#023a25 40px,#023f28 60px,#03472d 80px,#024f32 100px,#025738 120px,#00603e 140px,#006844 160px,#006e4c 180px,#007454 200px,#01795c 220px,#017d65 240px,#027f6c 260px,#027f72 280px,#027e75 300px,#027b77 320px,#027779 340px,#027379 360px,#026f7a 380px,#026c7b 400px,#01697c 420px,#01667e 440px,#016580 460px,#016383 480px,#016286 500px,#016288 520px,#01618b 540px,#01608c 560px,#005e8d 580px,#005c8d 600px,#01598b 620px,#015689 640px,#025186 660px,#024b83 680px,#024580 700px,#033f7e 720px,#03387b 740px,#053079 760px,#072975 780px,#0a2271 800px,#0d1b6c 820px,#0f1666 840px,#101163 860px,#100f63 880px)"></i>
<i style="background:linear-gradient(90deg,#003424 0px,#013724 20px,#023a25 40px,#024028 60px,#03472d 80px,#034f32 100px,#025738 120px,#00603e 140px,#006845 160px,#006e4c 180px,#007455 200px,#01795d 220px,#017d65 240px,#027f6c 260px,#027f72 280px,#027e75 300px,#027b78 320px,#027779 340px,#027379 360px,#026f7a 380px,#026b7b 400px,#02687c 420px,#01667e 440px,#016480 460px,#016383 480px,#016285 500px,#016188 520px,#01618b 540px,#01608d 560px,#015f8d 580px,#015d8d 600px,#015a8c 620px,#015689 640px,#025187 660px,#024c84 680px,#024681 700px,#033f7f 720px,#04387c 740px,#05307a 760px,#082976 780px,#0a2272 800px,#0d1b6c 820px,#0f1667 840px,#101264 860px,#100f64 880px)"></i>
<i style="background:linear-gradient(90deg,#013525 0px,#013724 20px,#023b25 40px,#034029 60px,#03472d 80px,#034f32 100px,#025838 120px,#01603e 140px,#006745 160px,#006e4d 180px,#007455 200px,#01795e 220px,#017d66 240px,#027f6d 260px,#027f72 280px,#027e76 300px,#027a78 320px,#027679 340px,#027279 360px,#026e7a 380px,#026a7b 400px,#02677c 420px,#02657d 440px,#016380 460px,#016282 480px,#016285 500px,#016188 520px,#01618b 540px,#01608d 560px,#015f8e 580px,#015d8e 600px,#015b8c 620px,#01578a 640px,#025287 660px,#024d84 680px,#024682 700px,#033f7f 720px,#04387d 740px,#05317a 760px,#082977 780px,#0a2273 800px,#0d1b6d 820px,#0f1668 840px,#0f1265 860px,#0f0f64 880px)"></i>
<i style="background:linear-gradient(90deg,#013625 0px,#013825 20px,#023b26 40px,#034129 60px,#03472d 80px,#035032 100px,#025838 120px,#01603e 140px,#006745 160px,#006e4d 180px,#007356 200px,#01795e 220px,#017d66 240px,#027f6d 260px,#027f73 280px,#027d76 300px,#027a78 320px,#027679 340px,#027279 360px,#026d7a 380px,#026a7a 400px,#02677b 420px,#02647d 440px,#02637f 460px,#016282 480px,#016185 500px,#016188 520px,#01618b 540px,#01618d 560px,#01608e 580px,#015e8e 600px,#015b8d 620px,#01578b 640px,#025388 660px,#024d85 680px,#034782 700px,#034080 720px,#04387e 740px,#06317b 760px,#082978 780px,#0a2273 800px,#0d1b6d 820px,#0e1568 840px,#0f1265 860px,#0f1065 880px)"></i>
<i style="background:linear-gradient(90deg,#013726 0px,#013925 20px,#023c26 40px,#034129 60px,#03482d 80px,#035032 100px,#025838 120px,#01603e 140px,#006746 160px,#006d4e 180px,#017356 200px,#01795e 220px,#027d67 240px,#027f6e 260px,#027f73 280px,#027d76 300px,#027a78 320px,#027579 340px,#027179 360px,#026d79 380px,#02697a 400px,#02667b 420px,#02647d 440px,#02627f 460px,#026182 480px,#016185 500px,#016188 520px,#01618b 540px,#01618d 560px,#01608e 580px,#015e8f 600px,#015c8e 620px,#01588b 640px,#025389 660px,#024e86 680px,#034783 700px,#034081 720px,#04397e 740px,#06317c 760px,#082978 780px,#0a2274 800px,#0c1b6e 820px,#0e1569 840px,#0f1266 860px,#0f1066 880px)"></i>
<i style="background:linear-gradient(90deg,#013827 0px,#023a26 20px,#023d26 40px,#034229 60px,#03492d 80px,#035032 100px,#025938 120px,#01603f 140px,#006746 160px,#006d4e 180px,#017356 200px,#01785f 220px,#027c67 240px,#027f6e 260px,#027f73 280px,#027d76 300px,#027978 320px,#027579 340px,#027079 360px,#026c79 380px,#02687a 400px,#02657b 420px,#02637c 440px,#02627e 460px,#026181 480px,#026184 500px,#016188 520px,#01618b 540px,#01618d 560px,#01608f 580px,#015f8f 600px,#015c8e 620px,#01588c 640px,#025489 660px,#024e86 680px,#034884 700px,#034181 720px,#04397f 740px,#06317c 760px,#082979 780px,#0a2175 800px,#0c1b6e 820px,#0d1669 840px,#0e1267 860px,#0e1067 880px)"></i>
<i style="background:linear-gradient(90deg,#013928 0px,#023b26 20px,#023e26 40px,#034329 60px,#03492d 80px,#035132 100px,#025938 120px,#01613f 140px,#006746 160px,#006d4e 180px,#017257 200px,#01785f 220px,#027c67 240px,#027e6e 260px,#027f73 280px,#027c76 300px,#027978 320px,#027478 340px,#027078 360px,#026b79 380px,#026879 400px,#02657a 420px,#02627c 440px,#02617e 460px,#026081 480px,#026084 500px,#016087 520px,#01618b 540px,#01618d 560px,#01618f 580px,#015f8f 600px,#015c8f 620px,#01598d 640px,#02548a 660px,#024f87 680px,#034884 700px,#034182 720px,#043980 740px,#06317d 760px,#082979 780px,#0a2175 800px,#0c1b6f 820px,#0d1669 840px,#0d1267 860px,#0e1169 880px)"></i>
<i style="background:linear-gradient(90deg,#013b29 0px,#023c27 20px,#033f27 40px,#034429 60px,#034a2d 80px,#035232 100px,#025a38 120px,#01613f 140px,#006747 160px,#006d4e 180px,#017257 200px,#01785f 220px,#027c67 240px,#027e6e 260px,#027e73 280px,#027c76 300px,#027878 320px,#027478 340px,#026f78 360px,#026b78 380px,#026778 400px,#026479 420px,#02627b 440px,#02607d 460px,#026080 480px,#026084 500px,#026087 520px,#01618a 540px,#01618d 560px,#01618f 580px,#015f90 600px,#015d8f 620px,#02598d 640px,#02558a 660px,#024f87 680px,#034985 700px,#034183 720px,#043980 740px,#06317d 760px,#08297a 780px,#0a2175 800px,#0b1b6f 820px,#0c166a 840px,#0d1368 860px,#0d126a 880px)"></i>
<i style="background:linear-gradient(90deg,#013c2a 0px,#023d28 20px,#034027 40px,#034529 60px,#034b2d 80px,#035332 100px,#025a38 120px,#01613f 140px,#006747 160px,#006c4f 180px,#017157 200px,#027760 220px,#027c68 240px,#027e6e 260px,#027e73 280px,#027c76 300px,#027878 320px,#027378 340px,#026f78 360px,#026a78 380px,#026678 400px,#026379 420px,#02617a 440px,#02607d 460px,#025f80 480px,#025f83 500px,#026087 520px,#02618a 540px,#01618d 560px,#01618f 580px,#016090 600px,#015d90 620px,#025a8e 640px,#02558b 660px,#035088 680px,#034985 700px,#034283 720px,#043a81 740px,#05317e 760px,#07297a 780px,#092275 800px,#0b1b6f 820px,#0b166a 840px,#0c1368 860px,#0d126b 880px)"></i>
<i style="background:linear-gradient(90deg,#013e2c 0px,#023f29 20px,#034128 40px,#034629 60px,#034c2d 80px,#035432 100px,#025b38 120px,#01623f 140px,#006847 160px,#006c4f 180px,#017157 200px,#027760 220px,#027b68 240px,#027e6f 260px,#027e74 280px,#027c76 300px,#027877 320px,#027378 340px,#026e77 360px,#026977 380px,#026677 400px,#026378 420px,#02617a 440px,#025f7c 460px,#025f7f 480px,#025f83 500px,#026086 520px,#02618a 540px,#01618d 560px,#01618f 580px,#016090 600px,#015d90 620px,#025a8e 640px,#02558b 660px,#025088 680px,#034986 700px,#034284 720px,#043a81 740px,#05327e 760px,#07297a 780px,#092275 800px,#0a1b6f 820px,#0b166a 840px,#0b1369 860px,#0c136c 880px)"></i>
<i style="background:linear-gradient(90deg,#013f2d 0px,#02402a 20px,#034328 40px,#03472a 60px,#034d2d 80px,#035532 100px,#025c38 120px,#00633f 140px,#006847 160px,#006c4f 180px,#017057 200px,#027660 220px,#027b68 240px,#027e6f 260px,#027e74 280px,#027b76 300px,#027777 320px,#027277 340px,#026d77 360px,#026976 380px,#026577 400px,#026277 420px,#026079 440px,#025f7b 460px,#025e7f 480px,#025f82 500px,#026086 520px,#02618a 540px,#02618d 560px,#016190 580px,#016091 600px,#015e90 620px,#025a8e 640px,#02568c 660px,#025089 680px,#034a86 700px,#034284 720px,#043a82 740px,#05327e 760px,#072a7a 780px,#082275 800px,#091b6f 820px,#0a166a 840px,#0b146a 860px,#0b146e 880px)"></i>
<i style="background:linear-gradient(90deg,#02412f 0px,#02422b 20px,#034429 40px,#03492a 60px,#034f2d 80px,#035632 100px,#015d38 120px,#006440 140px,#006848 160px,#006c4f 180px,#017057 200px,#027660 220px,#027b68 240px,#027e6f 260px,#027e74 280px,#027b76 300px,#027777 320px,#027277 340px,#026d76 360px,#026876 380px,#026476 400px,#026177 420px,#025f78 440px,#025e7b 460px,#025e7e 480px,#025e82 500px,#025f86 520px,#02608a 540px,#02618d 560px,#016190 580px,#016091 600px,#015e91 620px,#025a8f 640px,#02568c 660px,#025189 680px,#034a87 700px,#034385 720px,#043b82 740px,#05327f 760px,#062a7a 780px,#082275 800px,#091b6f 820px,#09176a 840px,#0a156b 860px,#0b156f 880px)"></i>
<i style="background:linear-gradient(90deg,#024331 0px,#02442c 20px,#03462a 40px,#034a2a 60px,#03512e 80px,#025832 100px,#015f38 120px,#006440 140px,#006948 160px,#006c50 180px,#017057 200px,#027560 220px,#027a68 240px,#027d6f 260px,#027e74 280px,#027b76 300px,#027676 320px,#027176 340px,#026c76 360px,#026875 380px,#026475 400px,#026176 420px,#025f78 440px,#025e7a 460px,#025e7d 480px,#025e81 500px,#025f85 520px,#026089 540px,#02618d 560px,#016190 580px,#016091 600px,#015e91 620px,#025b8f 640px,#02568c 660px,#025189 680px,#034a87 700px,#034385 720px,#033b82 740px,#04337f 760px,#062a7a 780px,#072275 800px,#081b6f 820px,#08176b 840px,#09156c 860px,#0a1671 880px)"></i>
<i style="background:linear-gradient(90deg,#024533 0px,#02462e 20px,#03482b 40px,#034c2b 60px,#03522e 80px,#025932 100px,#016038 120px,#006640 140px,#006a48 160px,#006d50 180px,#016f57 200px,#027560 220px,#027a68 240px,#027d6f 260px,#027d73 280px,#027a76 300px,#027676 320px,#027176 340px,#026c75 360px,#026775 380px,#026475 400px,#026175 420px,#025f77 440px,#025e79 460px,#025e7d 480px,#025e81 500px,#025f85 520px,#026089 540px,#02618d 560px,#026190 580px,#016091 600px,#015e91 620px,#025b8f 640px,#02568c 660px,#02518a 680px,#034b87 700px,#034385 720px,#033b83 740px,#04337f 760px,#052a7a 780px,#062274 800px,#071c6f 820px,#08176b 840px,#08166d 860px,#091773 880px)"></i>
<i style="background:linear-gradient(90deg,#024735 0px,#02482f 20px,#03492c 40px,#034e2c 60px,#03542e 80px,#025b33 100px,#016238 120px,#006740 140px,#006b48 160px,#006d50 180px,#017058 200px,#027560 220px,#027a68 240px,#027d6f 260px,#027d73 280px,#027a75 300px,#027576 320px,#027075 340px,#026b74 360px,#026774 380px,#026374 400px,#026075 420px,#025e76 440px,#025d79 460px,#025d7c 480px,#025e80 500px,#025f84 520px,#026089 540px,#02618d 560px,#026190 580px,#016092 600px,#015e92 620px,#025b90 640px,#02568d 660px,#02518a 680px,#024b88 700px,#034486 720px,#033c83 740px,#04337f 760px,#052b7a 780px,#062374 800px,#061c6f 820px,#07186c 840px,#08176e 860px,#091875 880px)"></i>
<i style="background:linear-gradient(90deg,#024a37 0px,#024a32 20px,#034c2d 40px,#03502d 60px,#03562f 80px,#025d33 100px,#016339 120px,#006840 140px,#006c49 160px,#006e51 180px,#017058 200px,#027560 220px,#027a68 240px,#037d6f 260px,#027d73 280px,#027a75 300px,#027575 320px,#027075 340px,#026b74 360px,#026773 380px,#026373 400px,#026074 420px,#025e76 440px,#025d78 460px,#025d7b 480px,#025e7f 500px,#025f84 520px,#026088 540px,#02618d 560px,#026190 580px,#016092 600px,#015e92 620px,#025b90 640px,#02568d 660px,#02518a 680px,#024b88 700px,#034486 720px,#033c84 740px,#04347f 760px,#052b7a 780px,#052374 800px,#061d6f 820px,#06196d 840px,#071870 860px,#081a78 880px)"></i>
<i style="background:linear-gradient(90deg,#024c3a 0px,#024c34 20px,#034e2f 40px,#03522e 60px,#035930 80px,#025f34 100px,#016539 120px,#006a40 140px,#006d49 160px,#006f51 180px,#017158 200px,#027660 220px,#027a67 240px,#037d6e 260px,#027d73 280px,#027974 300px,#027475 320px,#026f74 340px,#026b73 360px,#026673 380px,#026372 400px,#026073 420px,#035e75 440px,#025d78 460px,#025d7b 480px,#025e7f 500px,#025f83 520px,#026088 540px,#02618c 560px,#026190 580px,#016092 600px,#015e92 620px,#025b90 640px,#02578d 660px,#02518a 680px,#024b88 700px,#024486 720px,#033d84 740px,#033480 760px,#042b7a 780px,#052475 800px,#051e70 820px,#051a6e 840px,#061a72 860px,#081b7b 880px)"></i>
<i style="background:linear-gradient(90deg,#024f3d 0px,#024f37 20px,#025031 40px,#035530 60px,#035b31 80px,#026134 100px,#016739 120px,#006b40 140px,#006e49 160px,#007051 180px,#017258 200px,#027660 220px,#027a67 240px,#037d6e 260px,#027d72 280px,#027974 300px,#027474 320px,#026f73 340px,#026b73 360px,#026672 380px,#026372 400px,#026072 420px,#035e74 440px,#035d77 460px,#025d7a 480px,#025e7e 500px,#025f83 520px,#026088 540px,#02618c 560px,#026190 580px,#016092 600px,#015e92 620px,#025b90 640px,#02578d 660px,#02518a 680px,#024c88 700px,#024586 720px,#023d84 740px,#033580 760px,#042c7b 780px,#042475 800px,#041f71 820px,#051b70 840px,#061b75 860px,#071d7e 880px)"></i>
<i style="background:linear-gradient(90deg,#025140 0px,#02523a 20px,#025334 40px,#035832 60px,#025e33 80px,#026435 100px,#016939 120px,#006d41 140px,#007049 160px,#007151 180px,#017358 200px,#027760 220px,#027b67 240px,#037d6e 260px,#027d72 280px,#027973 300px,#027473 320px,#026f73 340px,#026b72 360px,#026671 380px,#026371 400px,#036072 420px,#035e74 440px,#035e76 460px,#035e7a 480px,#025e7e 500px,#025f82 520px,#026087 540px,#02618c 560px,#026190 580px,#016092 600px,#015e92 620px,#025b90 640px,#02578d 660px,#02528a 680px,#024c88 700px,#024586 720px,#023e84 740px,#033580 760px,#032c7b 780px,#042576 800px,#042073 820px,#041d72 840px,#051d78 860px,#071f82 880px)"></i>
<i style="background:linear-gradient(90deg,#025443 0px,#02553d 20px,#025637 40px,#035b35 60px,#026035 80px,#026636 100px,#016b3a 120px,#006f41 140px,#007149 160px,#007351 180px,#017458 200px,#02785f 220px,#027b67 240px,#037d6d 260px,#027c71 280px,#027873 300px,#027373 320px,#026f72 340px,#026b71 360px,#026771 380px,#026371 400px,#036071 420px,#035f73 440px,#035e76 460px,#035e79 480px,#025e7d 500px,#025f82 520px,#026087 540px,#02618c 560px,#026190 580px,#016092 600px,#025e91 620px,#025b8f 640px,#02578c 660px,#02528a 680px,#024c88 700px,#024687 720px,#023e85 740px,#033680 760px,#032d7b 780px,#032677 800px,#042175 820px,#041f75 840px,#051f7c 860px,#062286 880px)"></i>
<i style="background:linear-gradient(90deg,#025747 0px,#025841 20px,#025a3b 40px,#025e38 60px,#026337 80px,#026937 100px,#016d3a 120px,#007141 140px,#007349 160px,#007451 180px,#017658 200px,#02785f 220px,#027b66 240px,#027d6c 260px,#027c70 280px,#027872 300px,#027372 320px,#026f71 340px,#026b71 360px,#026770 380px,#026370 400px,#036171 420px,#035f73 440px,#035f75 460px,#035f79 480px,#035f7d 500px,#026081 520px,#026087 540px,#02618c 560px,#02618f 580px,#016091 600px,#025e91 620px,#025b8f 640px,#02568c 660px,#02528a 680px,#024c88 700px,#024687 720px,#023f85 740px,#023681 760px,#032e7c 780px,#032779 800px,#032277 820px,#032179 840px,#042280 860px,#06248b 880px)"></i>
<i style="background:linear-gradient(90deg,#025b4b 0px,#025b45 20px,#025d3f 40px,#02613b 60px,#026639 80px,#026b38 100px,#01703b 120px,#007241 140px,#007449 160px,#007551 180px,#017758 200px,#02795f 220px,#027c66 240px,#027d6c 260px,#027b6f 280px,#027771 300px,#027371 320px,#026f71 340px,#026b70 360px,#026870 380px,#02646f 400px,#036170 420px,#036072 440px,#035f75 460px,#035f79 480px,#03607d 500px,#026081 520px,#026186 540px,#02618b 560px,#02618f 580px,#016091 600px,#025e91 620px,#025a8f 640px,#02568c 660px,#02528a 680px,#024d88 700px,#024687 720px,#023f85 740px,#023781 760px,#032e7d 780px,#03287a 800px,#03247a 820px,#03237d 840px,#042485 860px,#062790 880px)"></i>
<i style="background:linear-gradient(90deg,#025e4f 0px,#025f49 20px,#026144 40px,#02653f 60px,#02693c 80px,#026e3a 100px,#01723b 120px,#017441 140px,#007649 160px,#017751 180px,#017858 200px,#027a5f 220px,#027c65 240px,#027d6b 260px,#027b6f 280px,#027770 300px,#027370 320px,#026f70 340px,#026c70 360px,#02686f 380px,#02656f 400px,#036270 420px,#036172 440px,#036075 460px,#036078 480px,#03607c 500px,#026181 520px,#026186 540px,#02618b 560px,#02618f 580px,#016091 600px,#025e90 620px,#025a8e 640px,#02568b 660px,#025289 680px,#024d88 700px,#024787 720px,#024085 740px,#023882 760px,#022f7e 780px,#03297c 800px,#03267d 820px,#032682 840px,#04278b 860px,#062a95 880px)"></i>
<i style="background:linear-gradient(90deg,#026153 0px,#02634e 20px,#026548 40px,#026843 60px,#026c3e 80px,#02713c 100px,#01743c 120px,#017642 140px,#00774a 160px,#017851 180px,#017958 200px,#027b5f 220px,#027d65 240px,#027d6a 260px,#027b6e 280px,#02776f 300px,#027370 320px,#027070 340px,#026d6f 360px,#02696f 380px,#02666f 400px,#036370 420px,#036272 440px,#036175 460px,#036178 480px,#03617c 500px,#026180 520px,#026286 540px,#02628b 560px,#02618f 580px,#016091 600px,#025d90 620px,#025a8e 640px,#02568b 660px,#025289 680px,#024d88 700px,#024787 720px,#024186 740px,#023983 760px,#02307f 780px,#022a7e 800px,#022781 820px,#032887 840px,#042a90 860px,#062d9b 880px)"></i>
<i style="background:linear-gradient(90deg,#026558 0px,#026653 20px,#02694d 40px,#026c47 60px,#026f42 80px,#02733e 100px,#01763d 120px,#017842 140px,#01794a 160px,#017a51 180px,#027b58 200px,#027c5f 220px,#027d64 240px,#027d69 260px,#027b6d 280px,#02776f 300px,#02736f 320px,#02716f 340px,#026e6f 360px,#026b6f 380px,#02676f 400px,#03646f 420px,#036372 440px,#036375 460px,#036378 480px,#03637c 500px,#036280 520px,#026285 540px,#02628b 560px,#02618f 580px,#016091 600px,#025d8f 620px,#025a8d 640px,#02578b 660px,#025289 680px,#024e88 700px,#024888 720px,#024186 740px,#023a84 760px,#023181 780px,#022b81 800px,#022985 820px,#032b8c 840px,#042d96 860px,#0630a1 880px)"></i>
<i style="background:linear-gradient(90deg,#02685c 0px,#026a57 20px,#026c52 40px,#026f4b 60px,#027345 80px,#027640 100px,#01783f 120px,#017943 140px,#017a4a 160px,#017b52 180px,#027c58 200px,#027d5e 220px,#027e64 240px,#027e69 260px,#027b6c 280px,#02776e 300px,#02746e 320px,#02726f 340px,#026f6f 360px,#026c6e 380px,#02696f 400px,#03666f 420px,#036572 440px,#036475 460px,#036478 480px,#03647c 500px,#036480 520px,#026385 540px,#02638b 560px,#02628f 580px,#016090 600px,#025e8f 620px,#025a8d 640px,#02578b 660px,#025389 680px,#024e89 700px,#024988 720px,#024287 740px,#023b85 760px,#023283 780px,#022c83 800px,#022b89 820px,#032e92 840px,#04319d 860px,#0533a8 880px)"></i>
<i style="background:linear-gradient(90deg,#026c60 0px,#026e5c 20px,#027057 40px,#027350 60px,#027648 80px,#027843 100px,#027a40 120px,#017b44 140px,#017c4b 160px,#017d52 180px,#027d58 200px,#027e5e 220px,#027f64 240px,#027e68 260px,#027c6b 280px,#02786d 300px,#02756e 320px,#02736e 340px,#02716e 360px,#026e6f 380px,#026b6f 400px,#036870 420px,#036772 440px,#036675 460px,#036679 480px,#03667c 500px,#03657f 520px,#026585 540px,#02648b 560px,#02638f 580px,#016190 600px,#025e8f 620px,#025a8c 640px,#02578a 660px,#025389 680px,#024e89 700px,#024989 720px,#024388 740px,#023c86 760px,#023385 780px,#022d86 800px,#022e8e 820px,#033198 840px,#0434a3 860px,#0636ae 880px)"></i>
<i style="background:linear-gradient(90deg,#026f65 0px,#027161 20px,#02745c 40px,#027654 60px,#02794c 80px,#027b46 100px,#027c43 120px,#017d45 140px,#017d4b 160px,#017e52 180px,#027f59 200px,#02805e 220px,#028064 240px,#027f68 260px,#027c6b 280px,#02786c 300px,#02766d 320px,#02756e 340px,#02736e 360px,#02706f 380px,#026d6f 400px,#036a70 420px,#036973 440px,#026976 460px,#036879 480px,#03677c 500px,#03667f 520px,#026685 540px,#02658a 560px,#02638f 580px,#016190 600px,#025e8e 620px,#025b8c 640px,#02578a 660px,#025389 680px,#024f89 700px,#024a8a 720px,#024489 740px,#023d88 760px,#023487 780px,#022e8a 800px,#023093 820px,#03349f 840px,#0438aa 860px,#0639b5 880px)"></i>
<i style="background:linear-gradient(90deg,#027369 0px,#027565 20px,#037861 40px,#027a58 60px,#027c4f 80px,#027d49 100px,#027e45 120px,#017e47 140px,#017e4c 160px,#027f53 180px,#028059 200px,#02815e 220px,#028163 240px,#028067 260px,#027d6a 280px,#027a6c 300px,#02786d 320px,#02776e 340px,#02756e 360px,#02736f 380px,#027070 400px,#036d71 420px,#026b73 440px,#026b77 460px,#026b7a 480px,#036a7c 500px,#03687f 520px,#026884 540px,#02668a 560px,#02648f 580px,#016290 600px,#025f8e 620px,#025b8c 640px,#01578a 660px,#01548a 680px,#024f8a 700px,#024a8b 720px,#02458b 740px,#023e8a 760px,#02358a 780px,#022f8d 800px,#023298 820px,#0338a5 840px,#043bb1 860px,#063cbc 880px)"></i>
<i style="background:linear-gradient(90deg,#02766e 0px,#03786a 20px,#037b65 40px,#027d5c 60px,#027f53 80px,#027f4c 100px,#028048 120px,#017f49 140px,#017f4d 160px,#028053 180px,#028159 200px,#02825f 220px,#028363 240px,#028267 260px,#027f6a 280px,#027b6b 300px,#027a6d 320px,#02796e 340px,#02786f 360px,#02766f 380px,#027370 400px,#027072 420px,#026e75 440px,#026e78 460px,#026d7a 480px,#026c7c 500px,#036a7f 520px,#026984 540px,#02688a 560px,#02668f 580px,#016390 600px,#025f8e 620px,#025b8b 640px,#01588a 660px,#01548a 680px,#02508b 700px,#024b8c 720px,#03468d 740px,#023f8d 760px,#02368d 780px,#023191 800px,#02359e 820px,#033bad 840px,#043eb9 860px,#063fc3 880px)"></i>
<i style="background:linear-gradient(90deg,#027a72 0px,#037c6e 20px,#037f69 40px,#028160 60px,#028157 80px,#028250 100px,#02814b 120px,#01804b 140px,#01804e 160px,#028154 180px,#028259 200px,#02845f 220px,#028463 240px,#028367 260px,#028169 280px,#027d6b 300px,#027c6c 320px,#027c6e 340px,#027b6f 360px,#027970 380px,#027671 400px,#027373 420px,#027276 440px,#027179 460px,#02707b 480px,#026f7d 500px,#026d80 520px,#026b84 540px,#026a8a 560px,#02678f 580px,#01648f 600px,#01608e 620px,#015c8c 640px,#01588b 660px,#01558b 680px,#01518c 700px,#024c8d 720px,#03478f 740px,#034090 760px,#033891 780px,#033396 800px,#0337a4 820px,#033fb4 840px,#0442c0 860px,#0643cb 880px)"></i>
<i style="background:linear-gradient(90deg,#037d76 0px,#037f72 20px,#03826d 40px,#028464 60px,#02845b 80px,#028454 100px,#02834e 120px,#01824d 140px,#01814f 160px,#028254 180px,#02845a 200px,#02855f 220px,#028664 240px,#028567 260px,#028369 280px,#02806b 300px,#027f6c 320px,#027f6e 340px,#027e6f 360px,#027c71 380px,#027a72 400px,#027774 420px,#027677 440px,#02757a 460px,#02747c 480px,#02727e 500px,#027080 520px,#026e85 540px,#026c8a 560px,#02688e 580px,#02658f 600px,#01618e 620px,#015d8c 640px,#01598b 660px,#01558c 680px,#01518d 700px,#024d8f 720px,#034791 740px,#034193 760px,#033995 780px,#03359b 800px,#033aab 820px,#0342bc 840px,#0545c8 860px,#0746d2 880px)"></i>
<i style="background:linear-gradient(90deg,#03807b 0px,#038377 20px,#038571 40px,#038768 60px,#02875f 80px,#028658 100px,#028452 120px,#01834f 140px,#018250 160px,#028355 180px,#02855b 200px,#028760 220px,#028864 240px,#028767 260px,#028669 280px,#02846b 300px,#02836c 320px,#02836e 340px,#028270 360px,#028072 380px,#027e74 400px,#027b76 420px,#027a79 440px,#02797c 460px,#02777d 480px,#02757f 500px,#027381 520px,#027085 540px,#026e89 560px,#026a8d 580px,#02668e 600px,#01628e 620px,#015d8d 640px,#005a8c 660px,#00568d 680px,#01528e 700px,#024e90 720px,#034893 740px,#034297 760px,#033a99 780px,#0337a0 800px,#033db2 820px,#0445c3 840px,#0548d0 860px,#0749da 880px)"></i>
<i style="background:linear-gradient(90deg,#03847f 0px,#03867b 20px,#038875 40px,#038a6d 60px,#028a64 80px,#02885c 100px,#028655 120px,#028452 140px,#018352 160px,#028456 180px,#02865c 200px,#028961 220px,#028a65 240px,#028a67 260px,#028969 280px,#02876b 300px,#02876d 320px,#02866f 340px,#028671 360px,#028473 380px,#028275 400px,#028078 420px,#027e7b 440px,#027d7e 460px,#027b7f 480px,#027980 500px,#027682 520px,#027385 540px,#027089 560px,#026c8d 580px,#02688e 600px,#01638e 620px,#015e8d 640px,#005a8d 660px,#00578e 680px,#015390 700px,#024e92 720px,#034996 740px,#03439a 760px,#033c9d 780px,#0339a6 800px,#033fb9 820px,#0447cb 840px,#064bd8 860px,#074be1 880px)"></i>
<i style="background:linear-gradient(90deg,#038783 0px,#03897f 20px,#038b79 40px,#038d71 60px,#028c68 80px,#028a60 100px,#028859 120px,#028554 140px,#018454 160px,#028557 180px,#02885d 200px,#028a62 220px,#038c66 240px,#028c68 260px,#028c6a 280px,#028b6b 300px,#028b6d 320px,#028b6f 340px,#028a72 360px,#028874 380px,#028777 400px,#02857a 420px,#02837d 440px,#02817f 460px,#027f80 480px,#027c81 500px,#027983 520px,#027686 540px,#027389 560px,#026e8c 580px,#02698e 600px,#01648f 620px,#005f8f 640px,#005b8f 660px,#005890 680px,#015492 700px,#024f95 720px,#034999 740px,#04439e 760px,#033da2 780px,#033bac 800px,#0442c1 820px,#054ad3 840px,#064de0 860px,#084ee9 880px)"></i>
<i style="background:linear-gradient(90deg,#038b88 0px,#038d83 20px,#038e7d 40px,#039075 60px,#028f6d 80px,#028c65 100px,#028a5d 120px,#028757 140px,#018556 160px,#028759 180px,#028a5e 200px,#028c63 220px,#038e67 240px,#028f69 260px,#028f6a 280px,#028f6b 300px,#028f6e 320px,#028f70 340px,#028e73 360px,#028d75 380px,#028c78 400px,#028a7c 420px,#02887f 440px,#028681 460px,#028382 480px,#028082 500px,#027d84 520px,#027987 540px,#02758a 560px,#02708c 580px,#026b8e 600px,#016690 620px,#006190 640px,#005c91 660px,#005992 680px,#015594 700px,#025098 720px,#034a9d 740px,#0444a2 760px,#033ea6 780px,#033db2 800px,#0445c9 820px,#054cdb 840px,#0750e7 860px,#0851f0 880px)"></i>
<i style="background:linear-gradient(90deg,#038e8c 0px,#039088 20px,#039182 40px,#03927a 60px,#029172 80px,#028f69 100px,#028c61 120px,#02895b 140px,#018758 160px,#02885b 180px,#028b60 200px,#028e65 220px,#039068 240px,#02916a 260px,#02936b 280px,#02946c 300px,#02946e 320px,#029471 340px,#029374 360px,#029277 380px,#02917a 400px,#028f7e 420px,#028d82 440px,#028a83 460px,#028883 480px,#028484 500px,#028185 520px,#027d88 540px,#02788a 560px,#02738c 580px,#026d8f 600px,#016791 620px,#006292 640px,#005d93 660px,#005a95 680px,#005697 700px,#02519b 720px,#034aa1 740px,#0444a7 760px,#033eab 780px,#033fb8 800px,#0547d1 820px,#064ee4 840px,#0752ef 860px,#0953f8 880px)"></i>
<i style="background:linear-gradient(90deg,#039190 0px,#03938c 20px,#039486 40px,#03957f 60px,#039477 80px,#02916e 100px,#028e65 120px,#028a5e 140px,#01885b 160px,#028a5d 180px,#028d63 200px,#029067 220px,#03936a 240px,#02946b 260px,#02966c 280px,#02986d 300px,#02996f 320px,#029873 340px,#029876 360px,#029778 380px,#02967c 400px,#029580 420px,#029284 440px,#028f85 460px,#028c85 480px,#028985 500px,#028587 520px,#028089 540px,#027b8b 560px,#03758d 580px,#026f90 600px,#016992 620px,#006394 640px,#005f95 660px,#005b97 680px,#00579b 700px,#02529f 720px,#034ba6 740px,#0444ac 760px,#043fb0 780px,#0441bf 800px,#054ada 820px,#0751ec 840px,#0854f7 860px,#0a55ff 880px)"></i>
<i style="background:linear-gradient(90deg,#039495 0px,#039690 20px,#03978b 40px,#039884 60px,#03967c 80px,#029374 100px,#02906a 120px,#028d62 140px,#018a5e 160px,#028c60 180px,#029065 200px,#029369 220px,#03956c 240px,#02976d 260px,#029a6e 280px,#029d6e 300px,#029e71 320px,#029d74 340px,#029d77 360px,#029c7a 380px,#029c7d 400px,#029a81 420px,#029886 440px,#029487 460px,#029187 480px,#028d87 500px,#028988 520px,#02848b 540px,#027e8d 560px,#03788e 580px,#027191 600px,#016b95 620px,#006596 640px,#006098 660px,#005c9b 680px,#00589f 700px,#0253a3 720px,#044bab 740px,#0545b2 760px,#0440b6 780px,#0443c7 800px,#064ce2 820px,#0853f4 840px,#0956ff 860px,#0a58ff 880px)"></i>
<i style="background:linear-gradient(90deg,#039899 0px,#039995 20px,#039a8f 40px,#039a88 60px,#039981 80px,#029679 100px,#02926f 120px,#028f66 140px,#028d62 160px,#028f64 180px,#029268 200px,#02956c 220px,#03986e 240px,#039b6f 260px,#039e6f 280px,#03a170 300px,#03a273 320px,#02a276 340px,#02a279 360px,#02a27c 380px,#02a27f 400px,#02a083 420px,#029d88 440px,#029a89 460px,#029688 480px,#029289 500px,#028d8a 520px,#02878c 540px,#02818f 560px,#037b90 580px,#027394 600px,#006c97 620px,#006699 640px,#00619b 660px,#005d9e 680px,#0059a3 700px,#0253a9 720px,#044cb1 740px,#0545b8 760px,#0542be 780px,#0545cf 800px,#074eeb 820px,#0855fc 840px,#0a58ff 860px,#0b5aff 880px)"></i>
<i style="background:linear-gradient(90deg,#039b9e 0px,#039c99 20px,#039d94 40px,#039d8d 60px,#039b86 80px,#02987e 100px,#029574 120px,#02926b 140px,#029066 160px,#029268 180px,#02956c 200px,#02986f 220px,#039b70 240px,#039e71 260px,#03a171 280px,#03a572 300px,#03a775 320px,#03a778 340px,#02a77b 360px,#02a77e 380px,#02a881 400px,#02a685 420px,#02a389 440px,#029f8a 460px,#029b8a 480px,#02968b 500px,#02918c 520px,#028b8f 540px,#028591 560px,#027d93 580px,#027696 600px,#006e9a 620px,#00689c 640px,#00639e 660px,#005ea2 680px,#015aa8 700px,#0254af 720px,#044cb8 740px,#0646bf 760px,#0543c6 780px,#0648d8 800px,#0851f3 820px,#0957ff 840px,#0a5aff 860px,#0c5cff 880px)"></i>
<i style="background:linear-gradient(90deg,#039ea2 0px,#039f9e 20px,#03a098 40px,#03a092 60px,#039e8b 80px,#029b84 100px,#029879 120px,#029570 140px,#02946b 160px,#02956d 180px,#029870 200px,#029b72 220px,#039e73 240px,#03a173 260px,#03a574 280px,#03aa75 300px,#03ac77 320px,#03ad7a 340px,#03ad7d 360px,#02ad80 380px,#02ae83 400px,#02ac87 420px,#02a98a 440px,#02a48c 460px,#02a08c 480px,#029b8d 500px,#01958e 520px,#028f91 540px,#028893 560px,#028096 580px,#01789a 600px,#00709d 620px,#006aa0 640px,#0064a2 660px,#005fa7 680px,#015bae 700px,#0255b6 720px,#054dbf 740px,#0646c7 760px,#0645cf 780px,#074ae1 800px,#0952fb 820px,#0a59ff 840px,#0b5cff 860px,#0d5eff 880px)"></i>
<i style="background:linear-gradient(90deg,#03a1a6 0px,#03a2a2 20px,#03a39d 40px,#03a397 60px,#03a191 80px,#039e89 100px,#029b7e 120px,#029875 140px,#029771 160px,#029972 180px,#029c74 200px,#029e76 220px,#03a176 240px,#03a476 260px,#03a976 280px,#03ae77 300px,#03b17a 320px,#03b27d 340px,#03b27f 360px,#02b382 380px,#02b485 400px,#02b288 420px,#02ae8c 440px,#02aa8d 460px,#02a58d 480px,#029f8f 500px,#029a91 520px,#029394 540px,#028b96 560px,#028399 580px,#017a9d 600px,#0072a1 620px,#006ba4 640px,#0066a6 660px,#0161ab 680px,#025cb4 700px,#0356bd 720px,#054dc7 740px,#0748cf 760px,#0747d8 780px,#084cea 800px,#0a54ff 820px,#0b5aff 840px,#0c5eff 860px,#0d60ff 880px)"></i>
<i style="background:linear-gradient(90deg,#04a4ab 0px,#03a6a7 20px,#03a6a2 40px,#03a69c 60px,#03a496 80px,#03a18e 100px,#029e83 120px,#029c7a 140px,#029c77 160px,#029d78 180px,#029f79 200px,#02a17a 220px,#03a479 240px,#03a879 260px,#03ad79 280px,#03b27a 300px,#03b67c 320px,#03b77f 340px,#03b882 360px,#02b984 380px,#02ba86 400px,#02b88a 420px,#02b48d 440px,#02af8f 460px,#02aa8f 480px,#02a491 500px,#029e93 520px,#029797 540px,#028f9a 560px,#02869d 580px,#017da1 600px,#0074a6 620px,#006da9 640px,#0167ab 660px,#0262b1 680px,#025dba 700px,#0357c5 720px,#064fcf 740px,#0849d7 760px,#0849e1 780px,#094ef2 800px,#0b56ff 820px,#0c5cff 840px,#0d60ff 860px,#0e62ff 880px)"></i>
<i style="background:linear-gradient(90deg,#04a8af 0px,#04a9ab 20px,#03a9a7 40px,#03a9a1 60px,#03a79b 80px,#03a593 100px,#02a289 120px,#02a080 140px,#02a07e 160px,#02a17e 180px,#02a37e 200px,#03a57e 220px,#03a77d 240px,#03ab7c 260px,#03b17c 280px,#03b67d 300px,#03bb7f 320px,#03bd82 340px,#03be84 360px,#03c086 380px,#02c188 400px,#02be8c 420px,#02ba8f 440px,#02b490 460px,#02af91 480px,#02a993 500px,#02a296 520px,#029b9a 540px,#02929d 560px,#0289a1 580px,#017fa6 600px,#0177aa 620px,#016fad 640px,#0269b0 660px,#0364b6 680px,#045fc1 700px,#0358cd 720px,#0650d7 740px,#094bdf 760px,#094ce9 780px,#0a50fa 800px,#0c58ff 820px,#0d5eff 840px,#0e62ff 860px,#0f64ff 880px)"></i>
<i style="background:linear-gradient(90deg,#04abb4 0px,#04acb0 20px,#04acab 40px,#03aca6 60px,#03aaa0 80px,#03a898 100px,#02a68e 120px,#02a486 140px,#02a584 160px,#02a685 180px,#02a784 200px,#03a882 220px,#03aa81 240px,#03ae7f 260px,#03b47f 280px,#03bb81 300px,#03c083 320px,#03c285 340px,#03c487 360px,#03c689 380px,#02c78b 400px,#02c48d 420px,#02bf90 440px,#03ba92 460px,#03b493 480px,#02ad95 500px,#02a799 520px,#029f9d 540px,#0296a1 560px,#028ca6 580px,#0182ab 600px,#0179af 620px,#0171b3 640px,#036bb5 660px,#0566bc 680px,#0561c8 700px,#045ad5 720px,#0752df 740px,#0a4de8 760px,#0a4ef2 780px,#0b53ff 800px,#0d5aff 820px,#0e60ff 840px,#0f64ff 860px,#1066ff 880px)"></i>
<i style="background:linear-gradient(90deg,#04aeb8 0px,#04afb5 20px,#04afb0 40px,#03afab 60px,#03aea5 80px,#03ac9d 100px,#03aa94 120px,#02a88c 140px,#02aa8c 160px,#02ab8b 180px,#03ab8a 200px,#03ac87 220px,#03ae85 240px,#03b283 260px,#03b883 280px,#03bf84 300px,#04c586 320px,#04c888 340px,#03ca8a 360px,#03cc8b 380px,#02cd8d 400px,#02ca8f 420px,#03c592 440px,#03bf93 460px,#03b995 480px,#03b298 500px,#02ab9c 520px,#02a3a1 540px,#029aa6 560px,#028faa 580px,#0185b0 600px,#017bb5 620px,#0273b8 640px,#046dbb 660px,#0768c2 680px,#0763ce 700px,#055cdd 720px,#0854e7 740px,#0a50ef 760px,#0c50fa 780px,#0c55ff 800px,#0e5cff 820px,#0f61ff 840px,#1065ff 860px,#1168ff 880px)"></i>
<i style="background:linear-gradient(90deg,#04b1bd 0px,#04b2b9 20px,#04b3b5 40px,#04b2b0 60px,#03b1aa 80px,#03afa3 100px,#03ae9a 120px,#02ad93 140px,#03af93 160px,#03b092 180px,#03b090 200px,#03b08c 220px,#03b189 240px,#03b587 260px,#03bc87 280px,#04c388 300px,#04c98a 320px,#04cd8b 340px,#03cf8d 360px,#03d18e 380px,#03d38f 400px,#03d092 420px,#03ca94 440px,#03c495 460px,#03bd97 480px,#03b79b 500px,#02afa0 520px,#02a7a5 540px,#029daa 560px,#0293af 580px,#0188b5 600px,#027eba 620px,#0375be 640px,#066fc1 660px,#096ac8 680px,#0965d5 700px,#075ee4 720px,#0957ee 740px,#0c52f7 760px,#0d53ff 780px,#0e58ff 800px,#0f5eff 820px,#1063ff 840px,#1167ff 860px,#126aff 880px)"></i>
<i style="background:linear-gradient(90deg,#04b5c1 0px,#04b6be 20px,#04b6ba 40px,#04b6b5 60px,#03b5af 80px,#03b3a8 100px,#03b2a0 120px,#03b29a 140px,#03b49b 160px,#03b59a 180px,#03b496 200px,#03b491 220px,#03b58d 240px,#03b98b 260px,#03c08b 280px,#04c88c 300px,#04ce8d 320px,#04d28f 340px,#04d590 360px,#03d791 380px,#03d892 400px,#03d594 420px,#03cf96 440px,#03c997 460px,#04c29a 480px,#03bb9e 500px,#03b3a3 520px,#02aba9 540px,#02a1ae 560px,#0296b4 580px,#028bba 600px,#0280c0 620px,#0478c4 640px,#0872c7 660px,#0b6cce 680px,#0c67db 700px,#0961eb 720px,#0a5af5 740px,#0d55ff 760px,#0e56ff 780px,#0f5aff 800px,#1060ff 820px,#1165ff 840px,#1269ff 860px,#136cff 880px)"></i>
<i style="background:linear-gradient(90deg,#04b8c6 0px,#04b9c3 20px,#04b9bf 40px,#04b9ba 60px,#04b8b5 80px,#03b7ae 100px,#03b7a7 120px,#03b7a2 140px,#03baa3 160px,#03baa1 180px,#03b99c 200px,#03b896 220px,#03b892 240px,#03bd8f 260px,#04c48f 280px,#04cc90 300px,#04d391 320px,#04d792 340px,#04da93 360px,#03dc94 380px,#03dd94 400px,#03da96 420px,#03d498 440px,#04ce9a 460px,#04c79c 480px,#03bfa1 500px,#03b8a7 520px,#03afad 540px,#03a5b3 560px,#0299b9 580px,#028ebf 600px,#0383c6 620px,#057aca 640px,#0a74cd 660px,#0e6fd5 680px,#0f69e1 700px,#0c63f1 720px,#0c5cfc 740px,#0e58ff 760px,#0f59ff 780px,#105dff 800px,#1162ff 820px,#1267ff 840px,#136bff 860px,#146dff 880px)"></i>
<i style="background:linear-gradient(90deg,#04bbcb 0px,#04bcc7 20px,#04bdc4 40px,#04bdbf 60px,#04bcba 80px,#04bbb4 100px,#03bbae 120px,#03bdaa 140px,#03bfac 160px,#03bfa8 180px,#03bda2 200px,#03bc9c 220px,#03bc96 240px,#03c093 260px,#04c893 280px,#04d094 300px,#04d895 320px,#04dc96 340px,#04df96 360px,#04e197 380px,#03e297 400px,#03df99 420px,#04d99b 440px,#04d39c 460px,#04cb9f 480px,#04c4a4 500px,#03bcaa 520px,#03b3b1 540px,#03a8b8 560px,#039dbe 580px,#0391c5 600px,#0486cb 620px,#077dcf 640px,#0c77d4 660px,#1171db 680px,#136ce7 700px,#0f66f7 720px,#0e5fff 740px,#105cff 760px,#115cff 780px,#115fff 800px,#1264ff 820px,#1369ff 840px,#146dff 860px,#156fff 880px)"></i>
<i style="background:linear-gradient(90deg,#05becf 0px,#04bfcc 20px,#04c0c8 40px,#04c0c4 60px,#04c0bf 80px,#04c0ba 100px,#03c0b4 120px,#03c2b2 140px,#03c5b4 160px,#03c4af 180px,#03c2a8 200px,#03c0a1 220px,#03c09b 240px,#04c498 260px,#04cc97 280px,#04d498 300px,#05dc99 320px,#05e19a 340px,#04e49a 360px,#04e69a 380px,#04e69b 400px,#04e39c 420px,#04de9e 440px,#05d79f 460px,#05d0a2 480px,#04c8a8 500px,#04c0ae 520px,#03b7b6 540px,#03acbc 560px,#03a0c3 580px,#0494ca 600px,#0588d1 620px,#0880d5 640px,#0d79da 660px,#1374e1 680px,#166eed 700px,#1268fc 720px,#1162ff 740px,#115fff 760px,#125fff 780px,#1362ff 800px,#1366ff 820px,#146bff 840px,#156fff 860px,#1571ff 880px)"></i>
<i style="background:linear-gradient(90deg,#05c2d4 0px,#05c3d1 20px,#04c3cd 40px,#04c4c9 60px,#04c4c5 80px,#04c4c0 100px,#04c4bb 120px,#04c7ba 140px,#04cabb 160px,#04c9b6 180px,#04c6ae 200px,#03c5a7 220px,#04c4a0 240px,#04c89d 260px,#04d09c 280px,#05d99c 300px,#05e09d 320px,#05e59d 340px,#04e89d 360px,#04eb9d 380px,#04eb9e 400px,#04e89f 420px,#05e2a1 440px,#05dca2 460px,#05d4a6 480px,#05ccab 500px,#04c4b2 520px,#04baba 540px,#04b0c1 560px,#04a3c8 580px,#0497cf 600px,#068cd6 620px,#0a83db 640px,#0f7ce0 660px,#1576e7 680px,#1971f3 700px,#156bff 720px,#1365ff 740px,#1362ff 760px,#1362ff 780px,#1465ff 800px,#1469ff 820px,#156dff 840px,#1671ff 860px,#1673ff 880px)"></i>
<i style="background:linear-gradient(90deg,#05c5d8 0px,#05c6d6 20px,#05c7d2 40px,#04c7ce 60px,#04c8ca 80px,#04c8c6 100px,#04c9c2 120px,#04cbc1 140px,#04cec2 160px,#04cdbc 180px,#04cbb4 200px,#04c9ac 220px,#04c9a6 240px,#04cda2 260px,#04d4a0 280px,#05dda0 300px,#05e4a1 320px,#05eaa1 340px,#05eda1 360px,#04efa1 380px,#04efa1 400px,#05eca2 420px,#05e6a4 440px,#05e0a6 460px,#05d8a9 480px,#05d0af 500px,#05c8b6 520px,#04bebe 540px,#04b3c6 560px,#05a7cd 580px,#059ad4 600px,#078fdb 620px,#0b86e1 640px,#117fe6 660px,#1779ed 680px,#1b74f9 700px,#176eff 720px,#1568ff 740px,#1565ff 760px,#1565ff 780px,#1567ff 800px,#166bff 820px,#166fff 840px,#1773ff 860px,#1775ff 880px)"></i>
<i style="background:linear-gradient(90deg,#05c8dd 0px,#05cada 20px,#05cad7 40px,#05cbd4 60px,#04cbd0 80px,#04cccb 100px,#04cec8 120px,#04d0c7 140px,#04d3c8 160px,#04d2c2 180px,#04cfba 200px,#04ceb2 220px,#04cdab 240px,#04d1a7 260px,#05d9a5 280px,#05e1a5 300px,#05e8a5 320px,#05eea5 340px,#05f1a5 360px,#05f3a5 380px,#05f3a5 400px,#05f0a6 420px,#05eba7 440px,#06e4aa 460px,#06dcad 480px,#06d4b3 500px,#05cbbb 520px,#05c2c3 540px,#05b6ca 560px,#05aad2 580px,#069ed9 600px,#0892e1 620px,#0d89e6 640px,#1382ec 660px,#197cf4 680px,#1c76ff 700px,#1a71ff 720px,#176cff 740px,#1668ff 760px,#1668ff 780px,#166aff 800px,#176eff 820px,#1771ff 840px,#1875ff 860px,#1877ff 880px)"></i>
<i style="background:linear-gradient(90deg,#05cce2 0px,#05cddf 20px,#05cedc 40px,#05cfd9 60px,#05cfd5 80px,#04d0d1 100px,#04d2cf 120px,#04d4ce 140px,#04d7cd 160px,#04d6c8 180px,#04d4c0 200px,#04d2b8 220px,#04d2b0 240px,#04d6ac 260px,#05ddaa 280px,#05e5a9 300px,#05eca9 320px,#05f2a9 340px,#05f5a9 360px,#05f7a9 380px,#05f7a9 400px,#05f4aa 420px,#06efab 440px,#06e8ad 460px,#06e0b1 480px,#06d8b7 500px,#06cfbf 520px,#06c5c7 540px,#06bacf 560px,#06add7 580px,#08a1de 600px,#0a96e6 620px,#0e8cec 640px,#1485f2 660px,#1a7ffa 680px,#1d79ff 700px,#1c74ff 720px,#196fff 740px,#186cff 760px,#186bff 780px,#186dff 800px,#1870ff 820px,#1874ff 840px,#1977ff 860px,#1979ff 880px)"></i>
<i style="background:linear-gradient(90deg,#05cfe6 0px,#05d0e4 20px,#05d1e1 40px,#05d2de 60px,#05d3da 80px,#05d4d7 100px,#05d6d5 120px,#05d9d4 140px,#05dbd3 160px,#04dace 180px,#04d8c6 200px,#04d7bd 220px,#04d7b6 240px,#05dab1 260px,#05e1af 280px,#05e9ae 300px,#06f0ae 320px,#06f6ad 340px,#06f9ad 360px,#06fbac 380px,#06faad 400px,#06f7ad 420px,#06f2af 440px,#06ecb1 460px,#07e4b6 480px,#07dcbc 500px,#06d3c3 520px,#06c8cc 540px,#07bdd4 560px,#07b1dc 580px,#09a4e3 600px,#0b99eb 620px,#1090f1 640px,#1688f8 660px,#1c82ff 680px,#1f7cff 700px,#1d77ff 720px,#1b72ff 740px,#1a6fff 760px,#196eff 780px,#1970ff 800px,#1973ff 820px,#1976ff 840px,#1a79ff 860px,#1a7cff 880px)"></i>
<i style="background:linear-gradient(90deg,#06d3eb 0px,#05d4e8 20px,#05d5e6 40px,#05d6e3 60px,#05d7e0 80px,#05d8dd 100px,#05dadb 120px,#05ddda 140px,#05dfd8 160px,#05ded3 180px,#05ddcb 200px,#05dbc3 220px,#05dcbb 240px,#05dfb6 260px,#05e5b4 280px,#06edb2 300px,#06f4b2 320px,#06f9b1 340px,#06fdb1 360px,#06feb0 380px,#06feb1 400px,#06fbb1 420px,#07f6b3 440px,#07efb6 460px,#07e8ba 480px,#07dfc0 500px,#07d6c8 520px,#07ccd0 540px,#07c0d8 560px,#08b4e0 580px,#0aa8e8 600px,#0d9df0 620px,#1193f7 640px,#178cfe 660px,#1d85ff 680px,#207fff 700px,#1f7aff 720px,#1d75ff 740px,#1b72ff 760px,#1b72ff 780px,#1a73ff 800px,#1a76ff 820px,#1b79ff 840px,#1b7bff 860px,#1b7eff 880px)"></i>
</div>
<svg id="ov" width="840" height="500" viewBox="0 0 840 500">
<defs>
<radialGradient id="lg" gradientUnits="userSpaceOnUse" cx="339" cy="169" r="410">
<stop offset="0.930" stop-color="#046080" stop-opacity="0"/>
<stop offset="0.942" stop-color="#0550b0"/>
<stop offset="0.951" stop-color="#1048e0"/>
<stop offset="0.961" stop-color="#3a3cf0"/>
<stop offset="0.968" stop-color="#4838f0"/>
<stop offset="0.974" stop-color="#3a40d0"/>
<stop offset="0.978" stop-color="#204490" stop-opacity="0.9"/>
<stop offset="0.983" stop-color="#084858" stop-opacity="0"/>
<stop offset="1" stop-color="#033f4c" stop-opacity="0"/>
</radialGradient>
<radialGradient id="lh" gradientUnits="userSpaceOnUse" cx="339" cy="169" r="410">
<stop offset="0.895" stop-color="#037070" stop-opacity="0"/>
<stop offset="0.915" stop-color="#045a70" stop-opacity="0.35"/>
<stop offset="0.930" stop-color="#046080" stop-opacity="0.6"/>
<stop offset="0.942" stop-color="#0550b0" stop-opacity="0"/>
<stop offset="1" stop-color="#0550b0" stop-opacity="0"/>
</radialGradient>
<linearGradient id="lhm" gradientUnits="userSpaceOnUse" x1="20" y1="380" x2="130" y2="500">
<stop offset="0" stop-color="#fff" stop-opacity="1"/>
<stop offset="0.45" stop-color="#fff" stop-opacity="0.8"/>
<stop offset="1" stop-color="#fff" stop-opacity="0"/>
</linearGradient>
<mask id="lhmask"><rect x="0" y="300" width="220" height="200" fill="url(#lhm)"/></mask>
<linearGradient id="ldark" gradientUnits="userSpaceOnUse" x1="0" y1="400" x2="90" y2="500">
<stop offset="0" stop-color="#033c4e"/>
<stop offset="1" stop-color="#03485e"/>
</linearGradient>
<clipPath id="lout"><path clip-rule="evenodd" d="M-10,300H230V510H-10Z M-62,169a401,401 0 1,0 802,0a401,401 0 1,0 -802,0Z"/></clipPath>
<radialGradient id="lg2" gradientUnits="userSpaceOnUse" cx="339" cy="169" r="410">
<stop offset="0.925" stop-color="#40a0f0" stop-opacity="0"/>
<stop offset="0.942" stop-color="#4070f8" stop-opacity="0.5"/>
<stop offset="0.955" stop-color="#6060f8" stop-opacity="0.8"/>
<stop offset="0.966" stop-color="#7a58f8" stop-opacity="1"/>
<stop offset="0.974" stop-color="#6050e0" stop-opacity="0.7"/>
<stop offset="0.980" stop-color="#084858" stop-opacity="0"/>
<stop offset="1" stop-color="#033f4c" stop-opacity="0"/>
</radialGradient>
<linearGradient id="lm" gradientUnits="userSpaceOnUse" x1="30" y1="400" x2="120" y2="500">
<stop offset="0" stop-color="#fff" stop-opacity="0"/>
<stop offset="1" stop-color="#fff" stop-opacity="1"/>
</linearGradient>
<mask id="lmask"><rect x="0" y="300" width="220" height="200" fill="url(#lm)"/></mask>
<radialGradient id="rg" gradientUnits="userSpaceOnUse" cx="553" cy="222" r="360">
<stop offset="0.880" stop-color="#3060f0" stop-opacity="0"/>
<stop offset="0.906" stop-color="#3a60f0" stop-opacity="0.6"/>
<stop offset="0.922" stop-color="#5458f4" stop-opacity="0.9"/>
<stop offset="0.936" stop-color="#7040f8"/>
<stop offset="0.942" stop-color="#6a38f0"/>
<stop offset="0.948" stop-color="#3a20d8"/>
<stop offset="0.953" stop-color="#2c18d8"/>
<stop offset="1" stop-color="#2a14d0"/>
</radialGradient>
</defs>
<rect x="-10" y="300" width="240" height="210" fill="url(#ldark)" clip-path="url(#lout)"/>
<rect x="0" y="300" width="220" height="200" fill="url(#lh)" mask="url(#lhmask)"/>
<rect x="0" y="300" width="220" height="200" fill="url(#lg)"/>
<rect x="0" y="300" width="220" height="200" fill="url(#lg2)" mask="url(#lmask)"/>
<rect x="640" y="340" width="200" height="160" fill="url(#rg)"/>
</svg>
<div class="frame"></div>

<div id="win">
 <div class="tb"></div>
 <div style="left:2.3px;top:2px;width:9.6px;height:9.6px;background:#2a1256;border-radius:1px"></div>
 <div style="left:3.7px;top:3.6px;width:6.8px;height:6.8px;border:1.5px solid #c4a0ee;border-radius:50%;box-sizing:border-box"></div>
 <div style="left:6.0px;top:5.9px;width:2.2px;height:2.2px;background:#faf4ff;border-radius:50%"></div>
 <div style="left:6.6px;top:2.4px;width:1px;height:1.2px;background:#9070c0"></div>
 <div class="t" style="left:16.00px;top:5.20px;font-size:7px;color:#404040">CPU-Z</div>
 <div style="left:175px;top:7px;width:7px;height:1px;background:#5a5a5a"></div>
 <div style="left:204px;top:4.6px;width:6.4px;height:6.4px;border:1px solid #d0d8d8;box-sizing:border-box"></div>
 <svg style="left:233px;top:4.6px" width="8" height="7" viewBox="0 0 8 7"><path d="M0.6,0.4L7.2,6.6M7.2,0.4L0.6,6.6" stroke="#202020" stroke-width="0.95"/></svg>
 <div class="t" style="left:9.70px;top:22.90px;letter-spacing:-0.50px">CPU</div>
 <div class="t" style="left:32.50px;top:22.90px;letter-spacing:0.12px">Mainboard</div>
 <div class="t" style="left:71.70px;top:22.90px;letter-spacing:0.00px">Memory</div>
 <div class="t" style="left:130.30px;top:22.90px;letter-spacing:-0.20px">Graphics</div>
 <div class="t" style="left:162.50px;top:22.90px;letter-spacing:0.00px">Bench</div>
 <div class="t" style="left:189.10px;top:22.90px;letter-spacing:0.30px">About</div>
 <div class="sep" style="left:28.00px;top:20.5px"></div>
 <div class="sep" style="left:67.00px;top:20.5px"></div>
 <div class="sep" style="left:158.00px;top:20.5px"></div>
 <div class="sep" style="left:185.00px;top:20.5px"></div>
 <div class="sep" style="left:211.00px;top:20.5px"></div>
 <div style="left:99.2px;top:15.6px;width:30.8px;height:18.9px;box-sizing:border-box;background:#e9eef5"></div>
 <div class="v" style="left:106.40px;top:22.40px;letter-spacing:-0.5px;color:#3a3a9a">SPD</div>
 <div style="left:99.2px;top:15.6px;width:30.8px;height:18.9px;border:3.8px solid #e41212;box-sizing:border-box"></div>
 <div style="left:1.5px;top:34px;width:248px;height:199.6px;border:1px solid #fbfbfb;border-right-color:#6a6a6a;border-bottom-color:#6a6a6a;box-sizing:border-box"></div>
 <div class="grp" style="left:5.3px;top:36.6px;width:241.3px;height:79px"></div>
 <div class="t lbl" style="left:10.60px;top:34.30px;letter-spacing:0">Memory Slot Selection</div>
 <div style="left:9.3px;top:43.4px;width:52.4px;height:12px;border:1px solid #8a8a8a;border-right-color:#d0d0d0;border-bottom-color:#d0d0d0;background:#fff;box-sizing:border-box"></div>
 <div class="v" style="left:11.20px;top:48.20px;letter-spacing:0.35px">Slot #1</div>
 <div style="left:51.2px;top:44.4px;width:10px;height:10.2px;background:#f0f0f0;border-right:1px solid #606060;border-bottom:1px solid #606060;box-sizing:border-box"></div>
 <svg style="left:54.4px;top:49px" width="4" height="3" viewBox="0 0 4 3"><path d="M0,0H4L2,2.4Z" fill="#000"/></svg>
 <div class="box" style="left:67.20px;top:45.60px;width:78.80px;height:11.60px"></div>
 <div class="box" style="left:191.30px;top:45.60px;width:52.90px;height:11.60px"></div>
 <div class="v" style="left:68.90px;top:48.20px;">DDR4 (SO-DIMM)</div>
 <div class="t r" style="left:130.00px;top:48.70px;width:56.40px;">Module Size</div>
 <div class="v c" style="left:191.30px;top:48.20px;width:52.90px;">16 GBytes</div>
 <div class="box" style="left:67.20px;top:57.00px;width:78.80px;height:11.80px"></div>
 <div class="box" style="left:191.30px;top:57.00px;width:52.90px;height:11.80px"></div>
 <div class="v c" style="left:67.20px;top:59.60px;width:78.80px;">DDR4-3200 (1600 MHz)</div>
 <div class="t r" style="left:0.00px;top:59.90px;width:61.20px;">Max Bandwidth</div>
 <div class="g r" style="left:130.00px;top:60.10px;width:56.40px;">SPD Ext.</div>
 <div class="box" style="left:67.20px;top:68.60px;width:78.80px;height:11.40px"></div>
 <div class="box" style="left:191.30px;top:68.60px;width:52.90px;height:11.40px"></div>
 <div class="v c" style="left:67.20px;top:71.20px;width:78.80px;">Kingston</div>
 <div class="t r" style="left:0.00px;top:71.50px;width:61.20px;">Module Manuf.</div>
 <div class="t r" style="left:130.00px;top:71.70px;width:56.40px;">Week/Year</div>
 <div class="v c" style="left:191.30px;top:71.20px;width:52.90px;">37 / 24</div>
 <div class="box" style="left:67.20px;top:79.80px;width:78.80px;height:11.60px"></div>
 <div class="box" style="left:191.30px;top:79.80px;width:52.90px;height:11.60px"></div>
 <div class="v c" style="left:67.20px;top:82.40px;width:78.80px;">Micron Technology</div>
 <div class="t r" style="left:0.00px;top:82.70px;width:61.20px;">DRAM Manuf.</div>
 <div class="t r" style="left:130.00px;top:82.90px;width:56.40px;">Ranks</div>
 <div class="v c" style="left:191.30px;top:82.40px;width:52.90px;">Single</div>
 <div class="box" style="left:67.20px;top:91.20px;width:78.80px;height:11.80px"></div>
 <div class="box" style="left:191.30px;top:91.20px;width:52.90px;height:11.80px"></div>
 <div class="v c" style="left:63.70px;top:93.80px;width:78.80px;letter-spacing:0.19px">9905700-122.A00G</div>
 <div class="t r" style="left:0.00px;top:94.10px;width:61.20px;">Part Number</div>
 <div class="g r" style="left:130.00px;top:94.30px;width:56.40px;">Correction</div>
 <div class="box" style="left:67.20px;top:102.80px;width:78.80px;height:10.60px"></div>
 <div class="box" style="left:191.30px;top:102.80px;width:52.90px;height:10.60px"></div>
 <div class="v c" style="left:67.20px;top:105.40px;width:78.80px;">E31D6951</div>
 <div class="t r" style="left:0.00px;top:105.70px;width:61.20px;">Serial Number</div>
 <div class="g r" style="left:130.00px;top:105.90px;width:56.40px;">Registered</div>
 <div class="grp" style="left:5.3px;top:121.8px;width:241.1px;height:101.6px"></div>
 <div class="t lbl" style="left:10.60px;top:118.80px;">Timings Table</div>
 <div class="t c" style="left:67.00px;top:125.20px;width:40.00px;">JEDEC #12</div>
 <div class="t c" style="left:107.00px;top:125.20px;width:40.00px;">JEDEC #13</div>
 <div class="t c" style="left:147.00px;top:125.20px;width:40.00px;">JEDEC #14</div>
 <div class="t c" style="left:187.00px;top:125.20px;width:40.00px;">JEDEC #15</div>
 <div class="t r" style="left:0.00px;top:135.90px;width:61.20px;">Frequency</div>
 <div class="box" style="left:67.00px;top:133.00px;width:40.00px;height:11.20px"></div>
 <div class="v c" style="left:67.00px;top:135.70px;width:40.00px;">1533 MHz</div>
 <div class="box" style="left:107.00px;top:133.00px;width:40.00px;height:11.20px"></div>
 <div class="v c" style="left:107.00px;top:135.70px;width:40.00px;">1600 MHz</div>
 <div class="box" style="left:147.00px;top:133.00px;width:40.00px;height:11.20px"></div>
 <div class="v c" style="left:147.00px;top:135.70px;width:40.00px;">1600 MHz</div>
 <div class="box" style="left:187.00px;top:133.00px;width:40.00px;height:11.20px"></div>
 <div class="v c" style="left:187.00px;top:135.70px;width:40.00px;">1600 MHz</div>
 <div class="t r" style="left:0.00px;top:146.90px;width:61.20px;">CAS# Latency</div>
 <div class="box" style="left:67.00px;top:144.00px;width:40.00px;height:11.30px"></div>
 <div class="v c" style="left:67.00px;top:146.70px;width:40.00px;">21.0</div>
 <div class="box" style="left:107.00px;top:144.00px;width:40.00px;height:11.30px"></div>
 <div class="v c" style="left:107.00px;top:146.70px;width:40.00px;">22.0</div>
 <div class="box" style="left:147.00px;top:144.00px;width:40.00px;height:11.30px"></div>
 <div class="v c" style="left:147.00px;top:146.70px;width:40.00px;">23.0</div>
 <div class="box" style="left:187.00px;top:144.00px;width:40.00px;height:11.30px"></div>
 <div class="v c" style="left:187.00px;top:146.70px;width:40.00px;">24.0</div>
 <div class="t r" style="left:0.00px;top:158.00px;width:61.20px;">RAS# to CAS#</div>
 <div class="box" style="left:67.00px;top:155.10px;width:40.00px;height:11.30px"></div>
 <div class="v c" style="left:67.00px;top:157.80px;width:40.00px;">22</div>
 <div class="box" style="left:107.00px;top:155.10px;width:40.00px;height:11.30px"></div>
 <div class="v c" style="left:107.00px;top:157.80px;width:40.00px;">22</div>
 <div class="box" style="left:147.00px;top:155.10px;width:40.00px;height:11.30px"></div>
 <div class="v c" style="left:147.00px;top:157.80px;width:40.00px;">22</div>
 <div class="box" style="left:187.00px;top:155.10px;width:40.00px;height:11.30px"></div>
 <div class="v c" style="left:187.00px;top:157.80px;width:40.00px;">22</div>
 <div class="t r" style="left:0.00px;top:169.10px;width:61.20px;">RAS# Precharge</div>
 <div class="box" style="left:67.00px;top:166.20px;width:40.00px;height:11.40px"></div>
 <div class="v c" style="left:67.00px;top:168.90px;width:40.00px;">22</div>
 <div class="box" style="left:107.00px;top:166.20px;width:40.00px;height:11.40px"></div>
 <div class="v c" style="left:107.00px;top:168.90px;width:40.00px;">22</div>
 <div class="box" style="left:147.00px;top:166.20px;width:40.00px;height:11.40px"></div>
 <div class="v c" style="left:147.00px;top:168.90px;width:40.00px;">22</div>
 <div class="box" style="left:187.00px;top:166.20px;width:40.00px;height:11.40px"></div>
 <div class="v c" style="left:187.00px;top:168.90px;width:40.00px;">22</div>
 <div class="t r" style="left:0.00px;top:180.30px;width:61.20px;">tRAS</div>
 <div class="box" style="left:67.00px;top:177.40px;width:40.00px;height:11.40px"></div>
 <div class="v c" style="left:67.00px;top:180.10px;width:40.00px;">50</div>
 <div class="box" style="left:107.00px;top:177.40px;width:40.00px;height:11.40px"></div>
 <div class="v c" style="left:107.00px;top:180.10px;width:40.00px;">52</div>
 <div class="box" style="left:147.00px;top:177.40px;width:40.00px;height:11.40px"></div>
 <div class="v c" style="left:147.00px;top:180.10px;width:40.00px;">52</div>
 <div class="box" style="left:187.00px;top:177.40px;width:40.00px;height:11.40px"></div>
 <div class="v c" style="left:187.00px;top:180.10px;width:40.00px;">52</div>
 <div class="t r" style="left:0.00px;top:191.50px;width:61.20px;">tRC</div>
 <div class="box" style="left:67.00px;top:188.60px;width:40.00px;height:11.40px"></div>
 <div class="v c" style="left:67.00px;top:191.30px;width:40.00px;">71</div>
 <div class="box" style="left:107.00px;top:188.60px;width:40.00px;height:11.40px"></div>
 <div class="v c" style="left:107.00px;top:191.30px;width:40.00px;">74</div>
 <div class="box" style="left:147.00px;top:188.60px;width:40.00px;height:11.40px"></div>
 <div class="v c" style="left:147.00px;top:191.30px;width:40.00px;">74</div>
 <div class="box" style="left:187.00px;top:188.60px;width:40.00px;height:11.40px"></div>
 <div class="v c" style="left:187.00px;top:191.30px;width:40.00px;">74</div>
 <div class="g r" style="left:0.00px;top:202.70px;width:61.20px;">Command Rate</div>
 <div class="box" style="left:67.00px;top:199.80px;width:40.00px;height:11.40px"></div>
 <div class="box" style="left:107.00px;top:199.80px;width:40.00px;height:11.40px"></div>
 <div class="box" style="left:147.00px;top:199.80px;width:40.00px;height:11.40px"></div>
 <div class="box" style="left:187.00px;top:199.80px;width:40.00px;height:11.40px"></div>
 <div class="t r" style="left:0.00px;top:213.90px;width:61.20px;">Voltage</div>
 <div class="box" style="left:67.00px;top:211.00px;width:40.00px;height:10.80px"></div>
 <div class="v c" style="left:67.00px;top:213.70px;width:40.00px;">1.20 V</div>
 <div class="box" style="left:107.00px;top:211.00px;width:40.00px;height:10.80px"></div>
 <div class="v c" style="left:107.00px;top:213.70px;width:40.00px;">1.20 V</div>
 <div class="box" style="left:147.00px;top:211.00px;width:40.00px;height:10.80px"></div>
 <div class="v c" style="left:147.00px;top:213.70px;width:40.00px;">1.20 V</div>
 <div class="box" style="left:187.00px;top:211.00px;width:40.00px;height:10.80px"></div>
 <div class="v c" style="left:187.00px;top:213.70px;width:40.00px;">1.20 V</div>
 <div style="left:0;top:233.2px;width:251px;height:1px;background:#6a6a6a"></div>
 <div class="logo" style="left:6.0px;top:236.6px">CPU-Z</div>
 <div class="t" style="left:50.80px;top:241.60px;letter-spacing:0.42px;color:#282828">Ver. 2.17.0.x64</div>
 <div class="btn" style="left:106px;top:235px;width:46.5px;height:13.6px"></div>
 <div style="left:141.3px;top:236px;width:1px;height:12px;background:#9a9a9a"></div>
 <div class="t c" style="left:106.00px;top:239.30px;width:35.30px;letter-spacing:0.27px">Tools</div>
 <svg style="left:144.8px;top:240.4px" width="5" height="3" viewBox="0 0 5 3"><path d="M0,0H5L2.5,2.8Z" fill="#000"/></svg>
 <div class="btn" style="left:155px;top:235px;width:45.5px;height:13.6px"></div>
 <div class="t c" style="left:155.00px;top:239.30px;width:45.50px;">Validate</div>
 <div class="btn" style="left:202px;top:235px;width:47px;height:13.6px"></div>
 <div class="t c" style="left:202.00px;top:239.30px;width:47.00px;">Close</div>
</div>
</body></html>
